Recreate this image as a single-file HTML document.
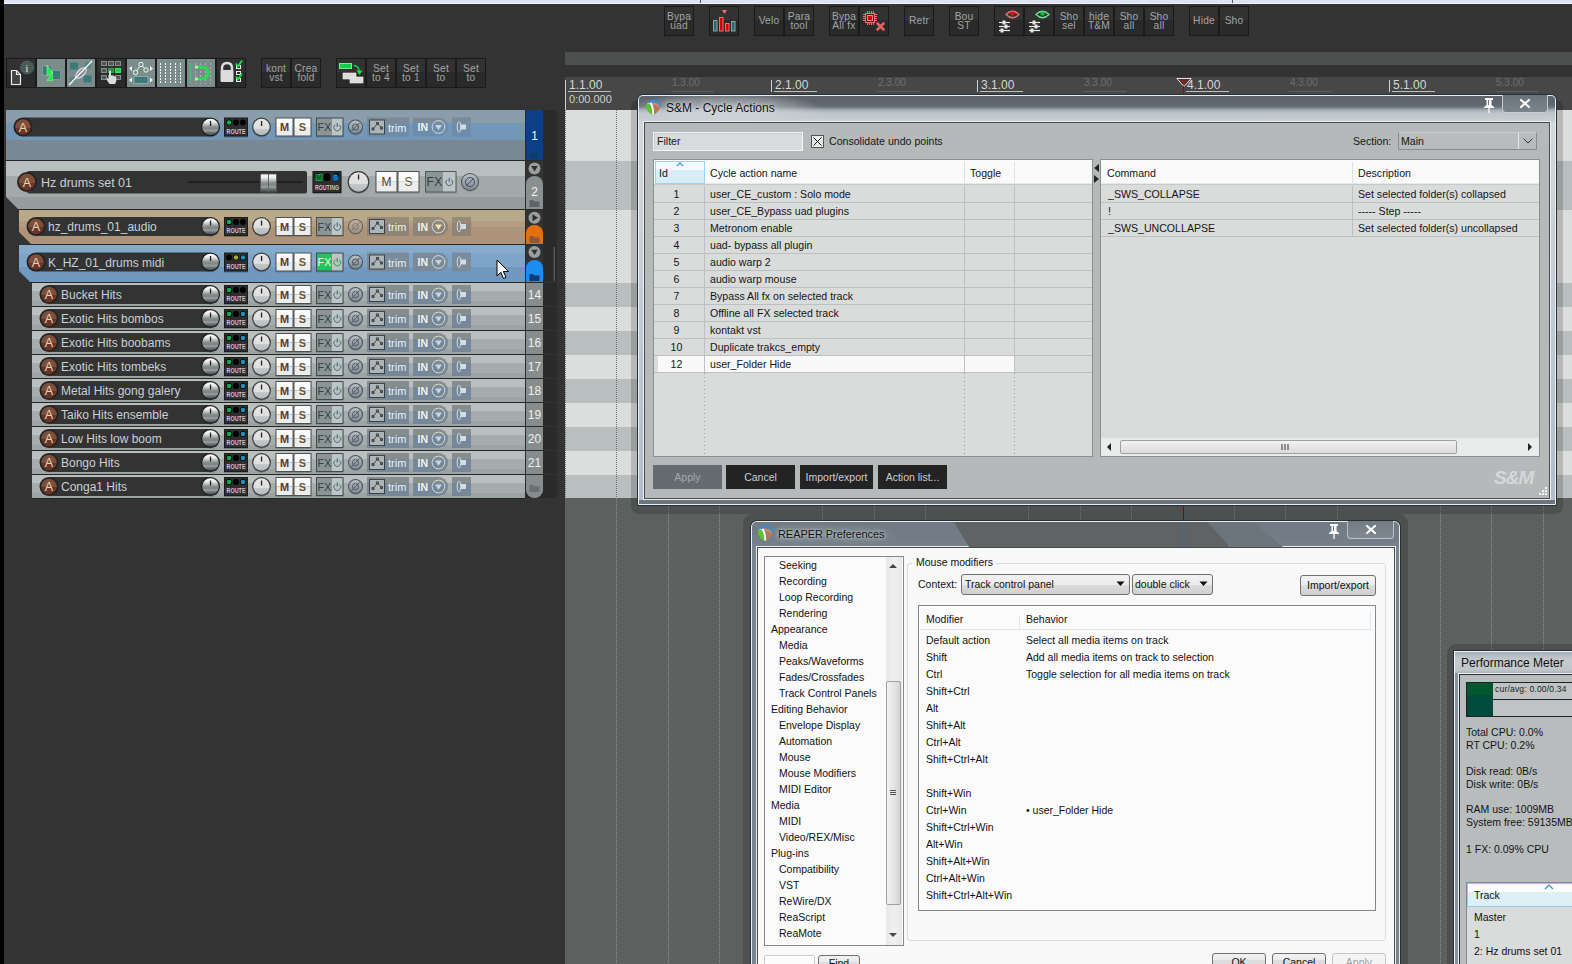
<!DOCTYPE html><html><head><meta charset="utf-8"><style>
*{margin:0;padding:0;box-sizing:border-box}
html,body{width:1572px;height:964px;overflow:hidden;background:#333;font-family:"Liberation Sans",sans-serif}
div,span,svg{position:absolute}
.tb{border:1px solid #1b1b1b;background:linear-gradient(#323232 0,#323232 48%,#2a2a2a 48%);color:#a4a4a4;font-size:10.2px;line-height:9px;letter-spacing:0.2px;text-align:center;overflow:hidden}
.tb span{position:static;display:block}
.hl{background:#7c8c8a}
</style></head><body>
<div style="left:0px;top:0px;width:1572px;height:3px;background:#dfe3f1"></div>
<div style="left:0px;top:3px;width:1572px;height:1px;background:#f4f4f8"></div>
<div style="left:700px;top:0px;width:1px;height:3px;background:#555"></div>
<div style="left:1232px;top:0px;width:1px;height:3px;background:#555"></div>
<div style="left:0px;top:0px;width:4px;height:964px;background:#000"></div>
<div class="tb" style="left:664px;top:6px;width:30px;height:30px;"><div style="left:0;top:5px;width:28px;"><span>Bypa</span><span>uad</span></div></div>
<div class="tb" style="left:709px;top:6px;width:30px;height:30px;"></div>
<div class="tb" style="left:754px;top:6px;width:30px;height:30px;"><div style="left:0;top:9px;width:28px;"><span>Velo</span></div></div>
<div class="tb" style="left:784px;top:6px;width:30px;height:30px;"><div style="left:0;top:5px;width:28px;"><span>Para</span><span>tool</span></div></div>
<div class="tb" style="left:829px;top:6px;width:30px;height:30px;"><div style="left:0;top:5px;width:28px;"><span>Bypa</span><span>All fx</span></div></div>
<div class="tb" style="left:859px;top:6px;width:30px;height:30px;"></div>
<div class="tb" style="left:904px;top:6px;width:30px;height:30px;"><div style="left:0;top:9px;width:28px;"><span>Retr</span></div></div>
<div class="tb" style="left:949px;top:6px;width:30px;height:30px;"><div style="left:0;top:5px;width:28px;"><span>Bou</span><span>ST</span></div></div>
<div class="tb" style="left:994px;top:6px;width:30px;height:30px;"></div>
<div class="tb" style="left:1024px;top:6px;width:30px;height:30px;"></div>
<div class="tb" style="left:1054px;top:6px;width:30px;height:30px;"><div style="left:0;top:5px;width:28px;"><span>Sho</span><span>sel</span></div></div>
<div class="tb" style="left:1084px;top:6px;width:30px;height:30px;"><div style="left:0;top:5px;width:28px;"><span>hide</span><span>T&amp;M</span></div></div>
<div class="tb" style="left:1114px;top:6px;width:30px;height:30px;"><div style="left:0;top:5px;width:28px;"><span>Sho</span><span>all</span></div></div>
<div class="tb" style="left:1144px;top:6px;width:30px;height:30px;"><div style="left:0;top:5px;width:28px;"><span>Sho</span><span>all</span></div></div>
<div class="tb" style="left:1189px;top:6px;width:30px;height:30px;"><div style="left:0;top:9px;width:28px;"><span>Hide</span></div></div>
<div class="tb" style="left:1219px;top:6px;width:30px;height:30px;"><div style="left:0;top:9px;width:28px;"><span>Sho</span></div></div>
<div class="tb" style="left:6px;top:58px;width:30px;height:30px;"></div>
<div class="tb" style="left:36px;top:58px;width:30px;height:30px;background:#7c8c8a;"></div>
<div class="tb" style="left:66px;top:58px;width:30px;height:30px;background:#7c8c8a;"></div>
<div class="tb" style="left:96px;top:58px;width:30px;height:30px;"></div>
<div class="tb" style="left:126px;top:58px;width:30px;height:30px;background:#7c8c8a;"></div>
<div class="tb" style="left:156px;top:58px;width:30px;height:30px;background:#7c8c8a;"></div>
<div class="tb" style="left:186px;top:58px;width:30px;height:30px;background:#7c8c8a;"></div>
<div class="tb" style="left:216px;top:58px;width:30px;height:30px;"></div>
<div class="tb" style="left:261px;top:58px;width:30px;height:30px;"><div style="left:0;top:5px;width:28px;"><span>kont</span><span>vst</span></div></div>
<div class="tb" style="left:291px;top:58px;width:30px;height:30px;"><div style="left:0;top:5px;width:28px;"><span>Crea</span><span>fold</span></div></div>
<div class="tb" style="left:336px;top:58px;width:30px;height:30px;"></div>
<div class="tb" style="left:366px;top:58px;width:30px;height:30px;"><div style="left:0;top:5px;width:28px;"><span>Set</span><span>to 4</span></div></div>
<div class="tb" style="left:396px;top:58px;width:30px;height:30px;"><div style="left:0;top:5px;width:28px;"><span>Set</span><span>to 1</span></div></div>
<div class="tb" style="left:426px;top:58px;width:30px;height:30px;"><div style="left:0;top:5px;width:28px;"><span>Set</span><span>to</span></div></div>
<div class="tb" style="left:456px;top:58px;width:30px;height:30px;"><div style="left:0;top:5px;width:28px;"><span>Set</span><span>to</span></div></div>
<svg style="left:709px;top:6px" width="30" height="30"><path d="M13 4 H18 L15.5 8 Z" fill="#f07070"/><rect x="4.5" y="14.5" width="3.5" height="10.5" fill="#2c6a68" stroke="#8aa4ac" stroke-width="1"/><rect x="10.5" y="11.5" width="3.5" height="13.5" fill="#d00000" stroke="#f07070" stroke-width="1"/><rect x="16.5" y="17.5" width="3.5" height="7.5" fill="#d00000" stroke="#f07070" stroke-width="1"/><rect x="22.5" y="15.5" width="3.5" height="9.5" fill="#2c6a68" stroke="#8aa4ac" stroke-width="1"/></svg>
<svg style="left:859px;top:6px" width="30" height="30"><rect x="8" y="5" width="1" height="2" fill="#f07070"/><rect x="8" y="17" width="1" height="2" fill="#f07070"/><rect x="4" y="8" width="2" height="1" fill="#f07070"/><rect x="16" y="8" width="2" height="1" fill="#f07070"/><rect x="10" y="5" width="1" height="2" fill="#f07070"/><rect x="10" y="17" width="1" height="2" fill="#f07070"/><rect x="4" y="10" width="2" height="1" fill="#f07070"/><rect x="16" y="10" width="2" height="1" fill="#f07070"/><rect x="12" y="5" width="1" height="2" fill="#f07070"/><rect x="12" y="17" width="1" height="2" fill="#f07070"/><rect x="4" y="12" width="2" height="1" fill="#f07070"/><rect x="16" y="12" width="2" height="1" fill="#f07070"/><rect x="14" y="5" width="1" height="2" fill="#f07070"/><rect x="14" y="17" width="1" height="2" fill="#f07070"/><rect x="4" y="14" width="2" height="1" fill="#f07070"/><rect x="16" y="14" width="2" height="1" fill="#f07070"/><rect x="6.5" y="7.5" width="9" height="9" fill="none" stroke="#f07070" stroke-width="1"/><rect x="8.5" y="9.5" width="5" height="5" fill="#d80000" stroke="#f08080" stroke-width="1"/><path d="M18.5 17.5 L24.5 23.5 M24.5 17.5 L18.5 23.5" stroke="#e86060" stroke-width="2.6" stroke-linecap="round"/></svg>
<svg style="left:994px;top:6px" width="30" height="30"><path d="M12 8.5 Q18.5 2 25 8.5 Q18.5 15 12 8.5 Z" fill="none" stroke="#f07070" stroke-width="1.3"/><circle cx="18.5" cy="7.6" r="2.2" fill="#e01010"/><g stroke="#e8e8e8" stroke-width="1.2"><line x1="5" y1="16.5" x2="16" y2="16.5"/><line x1="5" y1="20.5" x2="16" y2="20.5"/><line x1="5" y1="24.5" x2="16" y2="24.5"/></g><g fill="#e8e8e8"><rect x="8.5" y="14.5" width="3" height="4"/><rect x="10.5" y="18.5" width="3" height="4"/><rect x="6.5" y="22.5" width="3" height="4"/></g></svg>
<svg style="left:1024px;top:6px" width="30" height="30"><path d="M12 8.5 Q18.5 2 25 8.5 Q18.5 15 12 8.5 Z" fill="none" stroke="#70e090" stroke-width="1.3"/><circle cx="18.5" cy="7.6" r="2.2" fill="#10c040"/><g stroke="#e8e8e8" stroke-width="1.2"><line x1="5" y1="16.5" x2="16" y2="16.5"/><line x1="5" y1="20.5" x2="16" y2="20.5"/><line x1="5" y1="24.5" x2="16" y2="24.5"/></g><g fill="#e8e8e8"><rect x="8.5" y="14.5" width="3" height="4"/><rect x="10.5" y="18.5" width="3" height="4"/><rect x="6.5" y="22.5" width="3" height="4"/></g></svg>
<svg style="left:6px;top:58px" width="30" height="30"><circle cx="21" cy="9.5" r="6.5" fill="#555" stroke="#3a7a80" stroke-width="1" stroke-dasharray="1.5 1"/><text x="21" y="13.5" font-size="10" text-anchor="middle" fill="#eee" font-family="Liberation Serif">i</text><path d="M5.5 12.5 H10.5 L14.5 16.5 V26.5 H5.5 Z" fill="#444" stroke="#eee" stroke-width="1.2"/><path d="M10.5 12.5 V16.5 H14.5" fill="none" stroke="#eee" stroke-width="1.2"/></svg>
<svg style="left:36px;top:58px" width="30" height="30"><rect x="6.5" y="8" width="9" height="9" fill="#3a7a78" stroke="#90a8a8" stroke-width="0.6"/><rect x="15.5" y="12.5" width="9" height="9" fill="#3a7a78" stroke="#90a8a8" stroke-width="0.6"/><path d="M11 7 L16.5 15 L11 17.5 Z" fill="#18f040" stroke="#a8f8b0" stroke-width="0.5"/><path d="M16.5 13.5 V22.8 H11 Z" fill="#18f040" stroke="#a8f8b0" stroke-width="0.5"/></svg>
<svg style="left:66px;top:58px" width="30" height="30"><rect x="4" y="4.5" width="8" height="7" fill="#3a7a78"/><rect x="17.5" y="17.5" width="8" height="7" fill="#3a7a78"/><rect x="19" y="4" width="6" height="6" fill="#3a7a78" opacity="0.6"/><rect x="4" y="19" width="5" height="5" fill="#3a7a78" opacity="0.6"/><ellipse cx="15" cy="15" rx="3.2" ry="6.5" transform="rotate(45 15 15)" fill="none" stroke="#dde" stroke-width="1.3"/><line x1="3" y1="27" x2="26" y2="3" stroke="#f4f8f8" stroke-width="1.4"/></svg>
<svg style="left:96px;top:58px" width="30" height="30"><rect x="5.5" y="3.5" width="5" height="4" fill="#555" stroke="#7e9090" stroke-width="1"/><rect x="12.5" y="3.5" width="5" height="4" fill="#555" stroke="#7e9090" stroke-width="1"/><rect x="19.5" y="3.5" width="5" height="4" fill="#555" stroke="#7e9090" stroke-width="1"/><rect x="5.5" y="10.5" width="5" height="4" fill="#555" stroke="#7e9090" stroke-width="1"/><rect x="5.5" y="17.5" width="5" height="4" fill="#555" stroke="#7e9090" stroke-width="1"/><rect x="12.5" y="17.5" width="5" height="4" fill="#555" stroke="#7e9090" stroke-width="1"/><rect x="19.5" y="17.5" width="5" height="4" fill="#555" stroke="#7e9090" stroke-width="1"/><rect x="19.5" y="10.5" width="5" height="4" fill="#18d848" stroke="#40e060"/><rect x="12.5" y="10.5" width="5" height="4" fill="#18d848" stroke="#40e060" opacity="0.6"/><path d="M13.5 26 Q11 23 10.5 20.5 Q11 19.5 12.5 20.5 L13 21 V13 Q14 11.8 15 13 V18 Q16 17.5 17 18.2 Q18 17.8 18.8 18.6 Q19.8 18.4 20.3 19.4 V23 Q19.8 25 19 26 Z" fill="#dcdcdc"/></svg>
<svg style="left:126px;top:58px" width="30" height="30"><path d="M9.5 14.5 L15 6.5 L20 12" fill="none" stroke="#e8f4f4" stroke-width="1"/><circle cx="9.5" cy="14.5" r="2.2" fill="#7c8c8a" stroke="#e8ffff" stroke-width="1"/><circle cx="15" cy="6.5" r="2.2" fill="#7c8c8a" stroke="#e8ffff" stroke-width="1"/><circle cx="20" cy="12" r="2.2" fill="#7c8c8a" stroke="#e8ffff" stroke-width="1"/><path d="M3 10.5 L6 8 V13 Z M27 10.5 L24 8 V13 Z M3 22 L6 19.5 V24.5 Z M27 22 L24 19.5 V24.5 Z" fill="#f4f8f8"/><rect x="8" y="18.5" width="14" height="7" fill="#3a7a78" stroke="#90a8a8" stroke-width="1"/></svg>
<svg style="left:156px;top:58px" width="30" height="30"><line x1="4.5" y1="5" x2="4.5" y2="26" stroke="#f4f4f4" stroke-width="1.2" stroke-dasharray="2 1" shape-rendering="crispEdges"/><line x1="9.5" y1="5" x2="9.5" y2="26" stroke="#f4f4f4" stroke-width="1.2" stroke-dasharray="2 1" shape-rendering="crispEdges"/><line x1="14.5" y1="5" x2="14.5" y2="26" stroke="#f4f4f4" stroke-width="1.2" stroke-dasharray="2 1" shape-rendering="crispEdges"/><line x1="19.5" y1="5" x2="19.5" y2="26" stroke="#f4f4f4" stroke-width="1.2" stroke-dasharray="2 1" shape-rendering="crispEdges"/><line x1="24.5" y1="5" x2="24.5" y2="26" stroke="#f4f4f4" stroke-width="1.2" stroke-dasharray="2 1" shape-rendering="crispEdges"/></svg>
<svg style="left:186px;top:58px" width="30" height="30"><line x1="4.5" y1="5" x2="4.5" y2="26" stroke="#30e060" stroke-width="1" stroke-dasharray="2 1" shape-rendering="crispEdges"/><line x1="9.5" y1="5" x2="9.5" y2="26" stroke="#a8b4b4" stroke-width="1" stroke-dasharray="2 2" shape-rendering="crispEdges"/><line x1="14.5" y1="5" x2="14.5" y2="26" stroke="#a8b4b4" stroke-width="1" stroke-dasharray="2 2" shape-rendering="crispEdges"/><line x1="19.5" y1="5" x2="19.5" y2="26" stroke="#a8b4b4" stroke-width="1" stroke-dasharray="2 2" shape-rendering="crispEdges"/><line x1="24.5" y1="5" x2="24.5" y2="26" stroke="#a8b4b4" stroke-width="1" stroke-dasharray="2 2" shape-rendering="crispEdges"/><path d="M9 9 H15 Q22 9 22 15 Q22 21 15 21 H9" fill="none" stroke="#18e848" stroke-width="2.6"/><path d="M9 9 H12 M9 21 H12" stroke="#a8f8b8" stroke-width="2.6"/></svg>
<svg style="left:216px;top:58px" width="30" height="30"><path d="M6 12 V10 Q6 5 11 5 Q16 5 16 10 V12" fill="none" stroke="#dcdcdc" stroke-width="2.4"/><rect x="4.5" y="12" width="13" height="12" rx="1" fill="#dcdcdc"/><rect x="20.5" y="7.5" width="4" height="3" fill="none" stroke="#eee" stroke-width="1"/><rect x="20.5" y="13.5" width="4" height="3" fill="none" stroke="#eee" stroke-width="1"/><rect x="20.5" y="20.5" width="4" height="3" fill="none" stroke="#eee" stroke-width="1"/><path d="M20 5.5 L22 8.5 L26 2.5 M20 18.5 L22 21.5 L26 15.5" fill="none" stroke="#18e040" stroke-width="1.8"/></svg>
<svg style="left:336px;top:58px" width="30" height="30"><rect x="3.5" y="5.5" width="12" height="5" fill="#10d048" stroke="#70f090" stroke-width="1"/><path d="M17.5 7.5 Q22.5 7.5 23.5 13.5" fill="none" stroke="#10e048" stroke-width="1.5"/><path d="M20.5 12.5 H26.5 L23.5 17 Z" fill="#10e048"/><rect x="7" y="15" width="13" height="6" fill="#dadcdc" stroke="#f0f0f0" stroke-width="0.6"/><rect x="14" y="19" width="13" height="6" fill="#dadcdc" stroke="#f0f0f0" stroke-width="0.6"/></svg>
<div style="left:565px;top:52px;width:1007px;height:13px;background:#4e504f"></div>
<div style="left:565px;top:77px;width:1007px;height:33px;background:#474747"></div>
<div style="left:565px;top:80px;width:1px;height:30px;background:#cfcfcf"></div>
<div style="left:569px;top:79px;font-size:12px;color:#d6d6d6;line-height:12px">1.1.00</div>
<div style="left:568px;top:91px;width:43px;height:1px;background:#bdbdbd"></div>
<div style="left:569px;top:94px;font-size:11px;color:#d0d0d0;line-height:11px">0:00.000</div>
<div style="left:672px;top:78px;font-size:10px;color:#6e6e6e;line-height:10px">1.3.00</div>
<div style="left:671px;top:91px;width:43px;height:1px;background:#5e5e5e"></div>
<div style="left:771px;top:80px;width:1px;height:12px;background:#cfcfcf"></div>
<div style="left:775px;top:79px;font-size:12px;color:#d6d6d6;line-height:12px">2.1.00</div>
<div style="left:774px;top:91px;width:43px;height:1px;background:#bdbdbd"></div>
<div style="left:878px;top:78px;font-size:10px;color:#6e6e6e;line-height:10px">2.3.00</div>
<div style="left:877px;top:91px;width:43px;height:1px;background:#5e5e5e"></div>
<div style="left:977px;top:80px;width:1px;height:12px;background:#cfcfcf"></div>
<div style="left:981px;top:79px;font-size:12px;color:#d6d6d6;line-height:12px">3.1.00</div>
<div style="left:980px;top:91px;width:43px;height:1px;background:#bdbdbd"></div>
<div style="left:1084px;top:78px;font-size:10px;color:#6e6e6e;line-height:10px">3.3.00</div>
<div style="left:1083px;top:91px;width:43px;height:1px;background:#5e5e5e"></div>
<div style="left:1183px;top:80px;width:1px;height:12px;background:#cfcfcf"></div>
<div style="left:1187px;top:79px;font-size:12px;color:#d6d6d6;line-height:12px">4.1.00</div>
<div style="left:1186px;top:91px;width:43px;height:1px;background:#bdbdbd"></div>
<div style="left:1290px;top:78px;font-size:10px;color:#6e6e6e;line-height:10px">4.3.00</div>
<div style="left:1289px;top:91px;width:43px;height:1px;background:#5e5e5e"></div>
<div style="left:1389px;top:80px;width:1px;height:12px;background:#cfcfcf"></div>
<div style="left:1393px;top:79px;font-size:12px;color:#d6d6d6;line-height:12px">5.1.00</div>
<div style="left:1392px;top:91px;width:43px;height:1px;background:#bdbdbd"></div>
<div style="left:1496px;top:78px;font-size:10px;color:#6e6e6e;line-height:10px">5.3.00</div>
<div style="left:1495px;top:91px;width:43px;height:1px;background:#5e5e5e"></div>
<svg style="left:1176px;top:77px" width="17" height="33"><path d="M0.8 1.5 H15.2 L8 9.5 Z" fill="#6a2a22" stroke="#e0e0e0" stroke-width="1"/><line x1="7.5" y1="9" x2="7.5" y2="33" stroke="#8a1010"/></svg>
<div style="left:565px;top:110px;width:1007px;height:51px;background:#dcdedd"></div>
<div style="left:565px;top:161px;width:1007px;height:49px;background:#b9bfbe"></div>
<div style="left:565px;top:210px;width:1007px;height:73px;background:#dcdedd"></div>
<div style="left:565px;top:283px;width:1007px;height:24px;background:#b9bfbe"></div>
<div style="left:565px;top:307px;width:1007px;height:24px;background:#dcdedd"></div>
<div style="left:565px;top:331px;width:1007px;height:24px;background:#b9bfbe"></div>
<div style="left:565px;top:355px;width:1007px;height:24px;background:#dcdedd"></div>
<div style="left:565px;top:379px;width:1007px;height:24px;background:#b9bfbe"></div>
<div style="left:565px;top:403px;width:1007px;height:24px;background:#dcdedd"></div>
<div style="left:565px;top:427px;width:1007px;height:24px;background:#b9bfbe"></div>
<div style="left:565px;top:451px;width:1007px;height:24px;background:#dcdedd"></div>
<div style="left:565px;top:475px;width:1007px;height:23px;background:#b9bfbe"></div>
<div style="left:565px;top:498px;width:1007px;height:466px;background:#5e5f5f"></div>
<div style="left:616px;top:110px;width:1px;height:388px;background:repeating-linear-gradient(#6c7070 0 1px,transparent 1px 2px)"></div>
<div style="left:616px;top:498px;width:1px;height:466px;background:repeating-linear-gradient(#8c9090 0 1px,transparent 1px 2px)"></div>
<div style="left:668px;top:110px;width:1px;height:388px;background:repeating-linear-gradient(#6c7070 0 1px,transparent 1px 2px)"></div>
<div style="left:668px;top:498px;width:1px;height:466px;background:repeating-linear-gradient(#8c9090 0 1px,transparent 1px 2px)"></div>
<div style="left:719px;top:110px;width:1px;height:388px;background:repeating-linear-gradient(#6c7070 0 1px,transparent 1px 2px)"></div>
<div style="left:719px;top:498px;width:1px;height:466px;background:repeating-linear-gradient(#8c9090 0 1px,transparent 1px 2px)"></div>
<div style="left:771px;top:110px;width:1px;height:388px;background:repeating-linear-gradient(#6c7070 0 1px,transparent 1px 2px)"></div>
<div style="left:822px;top:110px;width:1px;height:388px;background:repeating-linear-gradient(#6c7070 0 1px,transparent 1px 2px)"></div>
<div style="left:822px;top:498px;width:1px;height:466px;background:repeating-linear-gradient(#8c9090 0 1px,transparent 1px 2px)"></div>
<div style="left:874px;top:110px;width:1px;height:388px;background:repeating-linear-gradient(#6c7070 0 1px,transparent 1px 2px)"></div>
<div style="left:874px;top:498px;width:1px;height:466px;background:repeating-linear-gradient(#8c9090 0 1px,transparent 1px 2px)"></div>
<div style="left:925px;top:110px;width:1px;height:388px;background:repeating-linear-gradient(#6c7070 0 1px,transparent 1px 2px)"></div>
<div style="left:925px;top:498px;width:1px;height:466px;background:repeating-linear-gradient(#8c9090 0 1px,transparent 1px 2px)"></div>
<div style="left:977px;top:110px;width:1px;height:388px;background:repeating-linear-gradient(#6c7070 0 1px,transparent 1px 2px)"></div>
<div style="left:1028px;top:110px;width:1px;height:388px;background:repeating-linear-gradient(#6c7070 0 1px,transparent 1px 2px)"></div>
<div style="left:1028px;top:498px;width:1px;height:466px;background:repeating-linear-gradient(#8c9090 0 1px,transparent 1px 2px)"></div>
<div style="left:1080px;top:110px;width:1px;height:388px;background:repeating-linear-gradient(#6c7070 0 1px,transparent 1px 2px)"></div>
<div style="left:1080px;top:498px;width:1px;height:466px;background:repeating-linear-gradient(#8c9090 0 1px,transparent 1px 2px)"></div>
<div style="left:1131px;top:110px;width:1px;height:388px;background:repeating-linear-gradient(#6c7070 0 1px,transparent 1px 2px)"></div>
<div style="left:1131px;top:498px;width:1px;height:466px;background:repeating-linear-gradient(#8c9090 0 1px,transparent 1px 2px)"></div>
<div style="left:1182px;top:110px;width:1px;height:388px;background:repeating-linear-gradient(#6c7070 0 1px,transparent 1px 2px)"></div>
<div style="left:1234px;top:110px;width:1px;height:388px;background:repeating-linear-gradient(#6c7070 0 1px,transparent 1px 2px)"></div>
<div style="left:1234px;top:498px;width:1px;height:466px;background:repeating-linear-gradient(#8c9090 0 1px,transparent 1px 2px)"></div>
<div style="left:1285px;top:110px;width:1px;height:388px;background:repeating-linear-gradient(#6c7070 0 1px,transparent 1px 2px)"></div>
<div style="left:1285px;top:498px;width:1px;height:466px;background:repeating-linear-gradient(#8c9090 0 1px,transparent 1px 2px)"></div>
<div style="left:1337px;top:110px;width:1px;height:388px;background:repeating-linear-gradient(#6c7070 0 1px,transparent 1px 2px)"></div>
<div style="left:1337px;top:498px;width:1px;height:466px;background:repeating-linear-gradient(#8c9090 0 1px,transparent 1px 2px)"></div>
<div style="left:1388px;top:110px;width:1px;height:388px;background:repeating-linear-gradient(#6c7070 0 1px,transparent 1px 2px)"></div>
<div style="left:1440px;top:110px;width:1px;height:388px;background:repeating-linear-gradient(#6c7070 0 1px,transparent 1px 2px)"></div>
<div style="left:1440px;top:498px;width:1px;height:466px;background:repeating-linear-gradient(#8c9090 0 1px,transparent 1px 2px)"></div>
<div style="left:1491px;top:110px;width:1px;height:388px;background:repeating-linear-gradient(#6c7070 0 1px,transparent 1px 2px)"></div>
<div style="left:1491px;top:498px;width:1px;height:466px;background:repeating-linear-gradient(#8c9090 0 1px,transparent 1px 2px)"></div>
<div style="left:1543px;top:110px;width:1px;height:388px;background:repeating-linear-gradient(#6c7070 0 1px,transparent 1px 2px)"></div>
<div style="left:1543px;top:498px;width:1px;height:466px;background:repeating-linear-gradient(#8c9090 0 1px,transparent 1px 2px)"></div>
<div style="left:565px;top:110px;width:1px;height:388px;background:repeating-linear-gradient(#777 0 1px,transparent 1px 2px)"></div>
<div style="left:1183px;top:498px;width:1px;height:466px;background:#8a1010"></div>
<svg style="left:0;top:110px" width="545" height="50"><defs>
<linearGradient id="gvol" x1="0" y1="0" x2="0" y2="1"><stop offset="0" stop-color="#ffffff"/><stop offset="0.2" stop-color="#eceeee"/><stop offset="0.38" stop-color="#b0b4b4"/><stop offset="0.5" stop-color="#868c8c"/><stop offset="0.62" stop-color="#7e8686"/><stop offset="0.72" stop-color="#9aa0a0"/><stop offset="0.84" stop-color="#687070"/><stop offset="0.95" stop-color="#505858"/><stop offset="1" stop-color="#202048"/></linearGradient>
<linearGradient id="gpan" x1="0" y1="0" x2="0" y2="1"><stop offset="0" stop-color="#e6e6e6"/><stop offset="0.6" stop-color="#dedede"/><stop offset="0.62" stop-color="#c4c8c8"/><stop offset="1" stop-color="#b4b8b8"/></linearGradient>
<linearGradient id="gph" x1="0" y1="0" x2="0" y2="1"><stop offset="0" stop-color="#b8c0c4"/><stop offset="0.5" stop-color="#98a4ac"/><stop offset="1" stop-color="#7a8890"/></linearGradient>
</defs><clipPath id="tc110"><path d="M6 0 H525 V50 H6 L6 50 Z"/></clipPath><g clip-path="url(#tc110)"><rect x="0" y="0" width="525" height="13" fill="#8a9daa"/><rect x="0" y="13" width="525" height="17" fill="#7297b7"/><rect x="0" y="30" width="525" height="20" fill="#7a8893"/></g><rect x="23" y="7.5" width="187" height="19" rx="2" fill="#333"/><circle cx="23" cy="18.5" r="8.5" fill="#5a6470" opacity="0.45"/><circle cx="23" cy="17" r="9.5" fill="#222"/><clipPath id="rc2317"><circle cx="23" cy="17" r="7.8"/></clipPath><g clip-path="url(#rc2317)"><rect x="13.5" y="7.5" width="19.0" height="10.5" fill="#7e4e38"/><rect x="13.5" y="18" width="19.0" height="9.5" fill="#6a3628"/></g><text x="23" y="21.8" font-size="12.5" text-anchor="middle" fill="#e6d2b4" font-family="Liberation Sans">A</text><circle cx="210.5" cy="18.5" r="9" fill="#3a4a5a" opacity="0.35"/><circle cx="210.5" cy="17" r="9.5" fill="#1e1e1e"/><circle cx="210.5" cy="17" r="8.3" fill="url(#gvol)"/><rect x="209.9" y="11" width="1.3" height="5" fill="#222"/><rect x="224" y="8.5" width="24" height="19" fill="#000" opacity="0.25"/><rect x="224" y="7.5" width="24" height="19" fill="#1c1c1c"/><rect x="225" y="8.5" width="22" height="17" fill="#2e2e2e"/><circle cx="229.0" cy="12.5" r="3" fill="#000"/><circle cx="229.0" cy="12.5" r="2.3" fill="#10b050"/><circle cx="236.0" cy="12.5" r="3" fill="#000"/><circle cx="243.0" cy="12.5" r="3" fill="#000"/><text x="236.0" y="23.5" font-size="7.5" text-anchor="middle" fill="#c8c8c8" font-family="Liberation Sans" font-weight="bold" textLength="19" lengthAdjust="spacingAndGlyphs">ROUTE</text><circle cx="261.5" cy="18.5" r="9" fill="#3a4a5a" opacity="0.3"/><circle cx="261.5" cy="17" r="9.4" fill="#3c3c3c"/><circle cx="261.5" cy="17" r="8.2" fill="url(#gpan)"/><rect x="260.9" y="11" width="1.3" height="5" fill="#222"/><rect x="275.5" y="8.5" width="18" height="19" fill="#2a4050" opacity="0.25"/><rect x="275.5" y="7.5" width="18" height="19" fill="#505050"/><rect x="276.5" y="8.5" width="16" height="8.5" fill="#fbfbfb"/><rect x="276.5" y="17.0" width="16" height="8.5" fill="#ebecec"/><text x="284.5" y="21.0" font-size="11" font-weight="bold" text-anchor="middle" fill="#5c3a2a" font-family="Liberation Sans">M</text><rect x="293.5" y="8.5" width="18" height="19" fill="#2a4050" opacity="0.25"/><rect x="293.5" y="7.5" width="18" height="19" fill="#505050"/><rect x="294.5" y="8.5" width="16" height="8.5" fill="#fbfbfb"/><rect x="294.5" y="17.0" width="16" height="8.5" fill="#ebecec"/><text x="302.5" y="21.0" font-size="11" font-weight="bold" text-anchor="middle" fill="#6a5838" font-family="Liberation Sans">S</text><rect x="316" y="8.5" width="27.5" height="19" fill="#2a4050" opacity="0.22"/><rect x="316" y="7.5" width="27.5" height="19" fill="#3e4a50"/><rect x="317" y="8.5" width="15" height="17" fill="#8a9696"/><rect x="332" y="8.5" width="10.5" height="17" fill="#bcc4c4"/><text x="324.5" y="21.0" font-size="10.5" text-anchor="middle" fill="#333b3b" font-family="Liberation Sans" letter-spacing="0.3">FX</text><path d="M335.05 14.9 A3.4 3.4 0 1 0 339.45 14.9" fill="none" stroke="#4a6a80" stroke-width="1"/><line x1="337.25" y1="13.0" x2="337.25" y2="17.0" stroke="#4a6a80" stroke-width="1.2"/><circle cx="355.5" cy="18" r="7.5" fill="#4a6070" opacity="0.25"/><circle cx="355.5" cy="17" r="7.5" fill="#4a5058"/><circle cx="355.5" cy="17" r="6.5" fill="url(#gph)"/><circle cx="355.5" cy="17" r="3.0" fill="none" stroke="#4a5260" stroke-width="1"/><line x1="351.5" y1="21" x2="359.5" y2="13" stroke="#4a5260" stroke-width="1"/><rect x="367" y="7.5" width="42" height="6" fill="#7a8a96"/><rect x="367" y="13.5" width="42" height="13" fill="#6e8cab"/><rect x="369" y="9.5" width="16" height="15" fill="#3c4246"/><rect x="370" y="10.5" width="14" height="13" fill="#acb6b6"/><polyline points="373,19.0 377.5,13.5 381.5,18.0" fill="none" stroke="#444c54" stroke-width="1"/><rect x="371.5" y="17.5" width="3" height="3" fill="#4a4e54"/><rect x="376" y="12.0" width="3" height="3" fill="#4a4e54"/><rect x="380" y="16.5" width="3" height="3" fill="#4a4e54"/><text x="388" y="21.5" font-size="11" fill="#eef2f2" font-family="Liberation Sans">trim</text><clipPath id="ib4137.5"><path d="M413 7.5 H438.5 A9.5 9.5 0 0 1 438.5 26.5 H413 Z"/></clipPath><g clip-path="url(#ib4137.5)"><rect x="413" y="7.5" width="36" height="6" fill="#7a8a96"/><rect x="413" y="13.5" width="36" height="13" fill="#6e8cab"/></g><text x="417.5" y="21.0" font-size="10.5" font-weight="bold" fill="#f0f2f2" font-family="Liberation Sans">IN</text><circle cx="438.5" cy="17.0" r="6.4" fill="none" stroke="#d4dadc" stroke-width="1"/><path d="M435.0 15.0 H442.0 L438.5 20.2 Z" fill="#c8d4dc"/><rect x="452" y="7.5" width="19" height="6" fill="#7a8a96"/><rect x="452" y="13.5" width="19" height="13" fill="#6e8cab"/><rect x="460" y="14.5" width="6" height="5" fill="#d2dce2"/><ellipse cx="459" cy="17.0" rx="1.8" ry="5.3" fill="#6e8cab" stroke="#d2dce2" stroke-width="1"/></svg>
<div style="left:6px;top:160px;width:519px;height:1px;background:#262626"></div>
<svg style="left:0;top:161px" width="545" height="48"><defs>
<linearGradient id="gvol" x1="0" y1="0" x2="0" y2="1"><stop offset="0" stop-color="#ffffff"/><stop offset="0.2" stop-color="#eceeee"/><stop offset="0.38" stop-color="#b0b4b4"/><stop offset="0.5" stop-color="#868c8c"/><stop offset="0.62" stop-color="#7e8686"/><stop offset="0.72" stop-color="#9aa0a0"/><stop offset="0.84" stop-color="#687070"/><stop offset="0.95" stop-color="#505858"/><stop offset="1" stop-color="#202048"/></linearGradient>
<linearGradient id="gpan" x1="0" y1="0" x2="0" y2="1"><stop offset="0" stop-color="#e6e6e6"/><stop offset="0.6" stop-color="#dedede"/><stop offset="0.62" stop-color="#c4c8c8"/><stop offset="1" stop-color="#b4b8b8"/></linearGradient>
<linearGradient id="gph" x1="0" y1="0" x2="0" y2="1"><stop offset="0" stop-color="#b8c0c4"/><stop offset="0.5" stop-color="#98a4ac"/><stop offset="1" stop-color="#7a8890"/></linearGradient>
</defs><clipPath id="tc161"><path d="M6 0 H525 V48 H18 L6 36 Z"/></clipPath><g clip-path="url(#tc161)"><rect x="0" y="0" width="525" height="15" fill="#b8bfbe"/><rect x="0" y="15" width="525" height="21" fill="#a2aaa9"/><rect x="0" y="36" width="525" height="12" fill="#969c9b"/></g><rect x="27" y="10" width="280" height="22.5" rx="2" fill="#333"/><circle cx="27" cy="22.5" r="9" fill="#5a6470" opacity="0.45"/><circle cx="27" cy="21" r="10" fill="#222"/><clipPath id="rc2721"><circle cx="27" cy="21" r="8.3"/></clipPath><g clip-path="url(#rc2721)"><rect x="17" y="11" width="20" height="11" fill="#7e4e38"/><rect x="17" y="22" width="20" height="10" fill="#6a3628"/></g><text x="27" y="25.8" font-size="12.5" text-anchor="middle" fill="#e6d2b4" font-family="Liberation Sans">A</text><text x="41" y="25.5" font-size="12.5" fill="#cad0d6" font-family="Liberation Sans">Hz drums set 01</text><rect x="188" y="20.5" width="115" height="1" fill="#111"/><rect x="260.5" y="13" width="16" height="18" rx="1" fill="url(#gvol)" stroke="#555" stroke-width="0.8"/><rect x="268" y="13" width="1" height="18" fill="#666"/><rect x="312.5" y="11" width="29" height="22" fill="#000" opacity="0.25"/><rect x="312.5" y="10" width="29" height="22" fill="#1c1c1c"/><rect x="313.5" y="11" width="27" height="20" fill="#2e2e2e"/><circle cx="317.5" cy="15" r="3" fill="#000"/><circle cx="327.0" cy="15" r="3" fill="#000"/><circle cx="336.5" cy="15" r="3" fill="#000"/><text x="327.0" y="29" font-size="7" text-anchor="middle" fill="#c8c8c8" font-family="Liberation Sans" font-weight="bold" textLength="24" lengthAdjust="spacingAndGlyphs">ROUTING</text><rect x="315.5" y="13" width="7" height="7" fill="#10a040"/><text x="319" y="19.2" font-size="6.5" text-anchor="middle" fill="#0a4020" font-family="Liberation Sans" font-weight="bold">M</text><circle cx="327" cy="16.5" r="3.6" fill="#000"/><circle cx="335.5" cy="16.5" r="3.6" fill="#0a4a80"/><text x="335.5" y="19" font-size="6.5" text-anchor="middle" fill="#10a0e0" font-family="Liberation Sans" font-weight="bold">S</text><circle cx="358.5" cy="22.5" r="10.5" fill="#3a4a5a" opacity="0.3"/><circle cx="358.5" cy="21" r="10.9" fill="#3c3c3c"/><circle cx="358.5" cy="21" r="9.7" fill="url(#gpan)"/><rect x="357.9" y="13.5" width="1.3" height="5" fill="#222"/><rect x="375.5" y="11" width="22" height="21.5" fill="#2a4050" opacity="0.25"/><rect x="375.5" y="10" width="22" height="21.5" fill="#505050"/><rect x="376.5" y="11" width="20" height="9.75" fill="#fbfbfb"/><rect x="376.5" y="20.75" width="20" height="9.75" fill="#ebecec"/><text x="386.5" y="24.75" font-size="12"  text-anchor="middle" fill="#5c3a2a" font-family="Liberation Sans">M</text><rect x="397.5" y="11" width="22" height="21.5" fill="#2a4050" opacity="0.25"/><rect x="397.5" y="10" width="22" height="21.5" fill="#505050"/><rect x="398.5" y="11" width="20" height="9.75" fill="#fbfbfb"/><rect x="398.5" y="20.75" width="20" height="9.75" fill="#ebecec"/><text x="408.5" y="24.75" font-size="12"  text-anchor="middle" fill="#6a5838" font-family="Liberation Sans">S</text><rect x="425" y="11" width="31.5" height="21.5" fill="#2a4050" opacity="0.22"/><rect x="425" y="10" width="31.5" height="21.5" fill="#505a5a"/><rect x="426" y="11" width="17" height="19.5" fill="#8a9696"/><rect x="443" y="11" width="12.5" height="19.5" fill="#bcc4c4"/><text x="434.5" y="24.75" font-size="12" text-anchor="middle" fill="#333b3b" font-family="Liberation Sans" letter-spacing="0.3">FX</text><path d="M447.05 18.65 A3.4 3.4 0 1 0 451.45 18.65" fill="none" stroke="#4a6a80" stroke-width="1"/><line x1="449.25" y1="16.75" x2="449.25" y2="20.75" stroke="#4a6a80" stroke-width="1.2"/><circle cx="470" cy="22" r="9" fill="#4a6070" opacity="0.25"/><circle cx="470" cy="21" r="9" fill="#4a5058"/><circle cx="470" cy="21" r="8" fill="url(#gph)"/><circle cx="470" cy="21" r="4.5" fill="none" stroke="#4a5260" stroke-width="1"/><line x1="466" y1="25" x2="474" y2="17" stroke="#4a5260" stroke-width="1"/></svg>
<div style="left:18px;top:209px;width:507px;height:1px;background:#262626"></div>
<svg style="left:0;top:210px" width="545" height="34"><defs>
<linearGradient id="gvol" x1="0" y1="0" x2="0" y2="1"><stop offset="0" stop-color="#ffffff"/><stop offset="0.2" stop-color="#eceeee"/><stop offset="0.38" stop-color="#b0b4b4"/><stop offset="0.5" stop-color="#868c8c"/><stop offset="0.62" stop-color="#7e8686"/><stop offset="0.72" stop-color="#9aa0a0"/><stop offset="0.84" stop-color="#687070"/><stop offset="0.95" stop-color="#505858"/><stop offset="1" stop-color="#202048"/></linearGradient>
<linearGradient id="gpan" x1="0" y1="0" x2="0" y2="1"><stop offset="0" stop-color="#e6e6e6"/><stop offset="0.6" stop-color="#dedede"/><stop offset="0.62" stop-color="#c4c8c8"/><stop offset="1" stop-color="#b4b8b8"/></linearGradient>
<linearGradient id="gph" x1="0" y1="0" x2="0" y2="1"><stop offset="0" stop-color="#b8c0c4"/><stop offset="0.5" stop-color="#98a4ac"/><stop offset="1" stop-color="#7a8890"/></linearGradient>
</defs><clipPath id="tc210"><path d="M19 0 H525 V34 H31 L19 22 Z"/></clipPath><g clip-path="url(#tc210)"><rect x="0" y="0" width="525" height="11" fill="#b8a98b"/><rect x="0" y="11" width="525" height="6" fill="#b39d82"/><rect x="0" y="17" width="525" height="17" fill="#ad9377"/></g><rect x="36" y="7.0" width="174" height="19" rx="2" fill="#333"/><circle cx="36" cy="18.0" r="8.5" fill="#5a6470" opacity="0.45"/><circle cx="36" cy="16.5" r="9.5" fill="#222"/><clipPath id="rc3616.5"><circle cx="36" cy="16.5" r="7.8"/></clipPath><g clip-path="url(#rc3616.5)"><rect x="26.5" y="7.0" width="19.0" height="10.5" fill="#7e4e38"/><rect x="26.5" y="17.5" width="19.0" height="9.5" fill="#6a3628"/></g><text x="36" y="21.3" font-size="12.5" text-anchor="middle" fill="#e6d2b4" font-family="Liberation Sans">A</text><text x="48" y="21.0" font-size="12" fill="#cad0d6" font-family="Liberation Sans">hz_drums_01_audio</text><circle cx="210.5" cy="18.0" r="9" fill="#3a4a5a" opacity="0.35"/><circle cx="210.5" cy="16.5" r="9.5" fill="#1e1e1e"/><circle cx="210.5" cy="16.5" r="8.3" fill="url(#gvol)"/><rect x="209.9" y="10.5" width="1.3" height="5" fill="#222"/><rect x="224" y="8.0" width="24" height="19" fill="#000" opacity="0.25"/><rect x="224" y="7.0" width="24" height="19" fill="#1c1c1c"/><rect x="225" y="8.0" width="22" height="17" fill="#2e2e2e"/><circle cx="229.0" cy="12.0" r="3" fill="#000"/><circle cx="229.0" cy="12.0" r="2.3" fill="#10b050"/><circle cx="236.0" cy="12.0" r="3" fill="#000"/><circle cx="243.0" cy="12.0" r="3" fill="#000"/><text x="236.0" y="23.0" font-size="7.5" text-anchor="middle" fill="#c8c8c8" font-family="Liberation Sans" font-weight="bold" textLength="19" lengthAdjust="spacingAndGlyphs">ROUTE</text><circle cx="261.5" cy="18.0" r="9" fill="#3a4a5a" opacity="0.3"/><circle cx="261.5" cy="16.5" r="9.4" fill="#3c3c3c"/><circle cx="261.5" cy="16.5" r="8.2" fill="url(#gpan)"/><rect x="260.9" y="10.5" width="1.3" height="5" fill="#222"/><rect x="275.5" y="8.0" width="18" height="19" fill="#2a4050" opacity="0.25"/><rect x="275.5" y="7.0" width="18" height="19" fill="#505050"/><rect x="276.5" y="8.0" width="16" height="8.5" fill="#fbfbfb"/><rect x="276.5" y="16.5" width="16" height="8.5" fill="#ebecec"/><text x="284.5" y="20.5" font-size="11" font-weight="bold" text-anchor="middle" fill="#5c3a2a" font-family="Liberation Sans">M</text><rect x="293.5" y="8.0" width="18" height="19" fill="#2a4050" opacity="0.25"/><rect x="293.5" y="7.0" width="18" height="19" fill="#505050"/><rect x="294.5" y="8.0" width="16" height="8.5" fill="#fbfbfb"/><rect x="294.5" y="16.5" width="16" height="8.5" fill="#ebecec"/><text x="302.5" y="20.5" font-size="11" font-weight="bold" text-anchor="middle" fill="#6a5838" font-family="Liberation Sans">S</text><rect x="316" y="8.0" width="27.5" height="19" fill="#2a4050" opacity="0.22"/><rect x="316" y="7.0" width="27.5" height="19" fill="#5a4a3c"/><rect x="317" y="8.0" width="15" height="17" fill="#8a9696"/><rect x="332" y="8.0" width="10.5" height="17" fill="#bcc4c4"/><text x="324.5" y="20.5" font-size="10.5" text-anchor="middle" fill="#333b3b" font-family="Liberation Sans" letter-spacing="0.3">FX</text><path d="M335.05 14.4 A3.4 3.4 0 1 0 339.45 14.4" fill="none" stroke="#4a6a80" stroke-width="1"/><line x1="337.25" y1="12.5" x2="337.25" y2="16.5" stroke="#4a6a80" stroke-width="1.2"/><circle cx="355.5" cy="17.5" r="7.5" fill="#4a6070" opacity="0.25"/><circle cx="355.5" cy="16.5" r="7.5" fill="#4a5058"/><circle cx="355.5" cy="16.5" r="6.5" fill="url(#gph)"/><circle cx="355.5" cy="16.5" r="3.0" fill="none" stroke="#4a5260" stroke-width="1"/><line x1="351.5" y1="20.5" x2="359.5" y2="12.5" stroke="#4a5260" stroke-width="1"/><circle cx="355.5" cy="16.5" r="7" fill="#c8a070" opacity="0.45"/><rect x="367" y="7.0" width="42" height="6" fill="#988c78"/><rect x="367" y="13.0" width="42" height="13" fill="#8e8478"/><rect x="369" y="9.0" width="16" height="15" fill="#3c4246"/><rect x="370" y="10.0" width="14" height="13" fill="#acb6b6"/><polyline points="373,18.5 377.5,13.0 381.5,17.5" fill="none" stroke="#444c54" stroke-width="1"/><rect x="371.5" y="17.0" width="3" height="3" fill="#4a4e54"/><rect x="376" y="11.5" width="3" height="3" fill="#4a4e54"/><rect x="380" y="16.0" width="3" height="3" fill="#4a4e54"/><text x="388" y="21.0" font-size="11" fill="#eef2f2" font-family="Liberation Sans">trim</text><clipPath id="ib4137.0"><path d="M413 7.0 H438.5 A9.5 9.5 0 0 1 438.5 26.0 H413 Z"/></clipPath><g clip-path="url(#ib4137.0)"><rect x="413" y="7.0" width="36" height="6" fill="#988c78"/><rect x="413" y="13.0" width="36" height="13" fill="#8e8478"/></g><text x="417.5" y="20.5" font-size="10.5" font-weight="bold" fill="#f0f2f2" font-family="Liberation Sans">IN</text><circle cx="438.5" cy="16.5" r="6.4" fill="none" stroke="#d4dadc" stroke-width="1"/><path d="M435.0 14.5 H442.0 L438.5 19.7 Z" fill="#e8e8b0"/><rect x="452" y="7.0" width="19" height="6" fill="#988c78"/><rect x="452" y="13.0" width="19" height="13" fill="#8e8478"/><rect x="460" y="14.0" width="6" height="5" fill="#d2dce2"/><ellipse cx="459" cy="16.5" rx="1.8" ry="5.3" fill="#8e8478" stroke="#d2dce2" stroke-width="1"/></svg>
<div style="left:31px;top:244px;width:494px;height:1px;background:#262626"></div>
<svg style="left:0;top:245px" width="545" height="37"><defs>
<linearGradient id="gvol" x1="0" y1="0" x2="0" y2="1"><stop offset="0" stop-color="#ffffff"/><stop offset="0.2" stop-color="#eceeee"/><stop offset="0.38" stop-color="#b0b4b4"/><stop offset="0.5" stop-color="#868c8c"/><stop offset="0.62" stop-color="#7e8686"/><stop offset="0.72" stop-color="#9aa0a0"/><stop offset="0.84" stop-color="#687070"/><stop offset="0.95" stop-color="#505858"/><stop offset="1" stop-color="#202048"/></linearGradient>
<linearGradient id="gpan" x1="0" y1="0" x2="0" y2="1"><stop offset="0" stop-color="#e6e6e6"/><stop offset="0.6" stop-color="#dedede"/><stop offset="0.62" stop-color="#c4c8c8"/><stop offset="1" stop-color="#b4b8b8"/></linearGradient>
<linearGradient id="gph" x1="0" y1="0" x2="0" y2="1"><stop offset="0" stop-color="#b8c0c4"/><stop offset="0.5" stop-color="#98a4ac"/><stop offset="1" stop-color="#7a8890"/></linearGradient>
</defs><clipPath id="tc245"><path d="M19 0 H525 V37 H30 L19 26 Z"/></clipPath><g clip-path="url(#tc245)"><rect x="0" y="0" width="525" height="9" fill="#86aacc"/><rect x="0" y="9" width="525" height="13" fill="#7ea4c8"/><rect x="0" y="22" width="525" height="15" fill="#7198bf"/></g><rect x="36" y="7.5" width="174" height="19" rx="2" fill="#333"/><circle cx="36" cy="18.5" r="8.5" fill="#5a6470" opacity="0.45"/><circle cx="36" cy="17" r="9.5" fill="#222"/><clipPath id="rc3617"><circle cx="36" cy="17" r="7.8"/></clipPath><g clip-path="url(#rc3617)"><rect x="26.5" y="7.5" width="19.0" height="10.5" fill="#7e4e38"/><rect x="26.5" y="18" width="19.0" height="9.5" fill="#6a3628"/></g><text x="36" y="21.8" font-size="12.5" text-anchor="middle" fill="#e6d2b4" font-family="Liberation Sans">A</text><text x="48" y="21.5" font-size="12" fill="#cad0d6" font-family="Liberation Sans">K_HZ_01_drums midi</text><circle cx="210.5" cy="18.5" r="9" fill="#3a4a5a" opacity="0.35"/><circle cx="210.5" cy="17" r="9.5" fill="#1e1e1e"/><circle cx="210.5" cy="17" r="8.3" fill="url(#gvol)"/><rect x="209.9" y="11" width="1.3" height="5" fill="#222"/><rect x="224" y="8.5" width="24" height="19" fill="#000" opacity="0.25"/><rect x="224" y="7.5" width="24" height="19" fill="#1c1c1c"/><rect x="225" y="8.5" width="22" height="17" fill="#2e2e2e"/><circle cx="229.0" cy="12.5" r="3" fill="#000"/><circle cx="236.0" cy="12.5" r="3" fill="#000"/><circle cx="236.0" cy="12.5" r="2.3" fill="#a8a820"/><circle cx="243.0" cy="12.5" r="3" fill="#000"/><circle cx="243.0" cy="12.5" r="2.3" fill="#1890c0"/><text x="236.0" y="23.5" font-size="7.5" text-anchor="middle" fill="#c8c8c8" font-family="Liberation Sans" font-weight="bold" textLength="19" lengthAdjust="spacingAndGlyphs">ROUTE</text><circle cx="261.5" cy="18.5" r="9" fill="#3a4a5a" opacity="0.3"/><circle cx="261.5" cy="17" r="9.4" fill="#3c3c3c"/><circle cx="261.5" cy="17" r="8.2" fill="url(#gpan)"/><rect x="260.9" y="11" width="1.3" height="5" fill="#222"/><rect x="275.5" y="8.5" width="18" height="19" fill="#2a4050" opacity="0.25"/><rect x="275.5" y="7.5" width="18" height="19" fill="#505050"/><rect x="276.5" y="8.5" width="16" height="8.5" fill="#fbfbfb"/><rect x="276.5" y="17.0" width="16" height="8.5" fill="#ebecec"/><text x="284.5" y="21.0" font-size="11" font-weight="bold" text-anchor="middle" fill="#5c3a2a" font-family="Liberation Sans">M</text><rect x="293.5" y="8.5" width="18" height="19" fill="#2a4050" opacity="0.25"/><rect x="293.5" y="7.5" width="18" height="19" fill="#505050"/><rect x="294.5" y="8.5" width="16" height="8.5" fill="#fbfbfb"/><rect x="294.5" y="17.0" width="16" height="8.5" fill="#ebecec"/><text x="302.5" y="21.0" font-size="11" font-weight="bold" text-anchor="middle" fill="#6a5838" font-family="Liberation Sans">S</text><rect x="316" y="8.5" width="27.5" height="19" fill="#2a4050" opacity="0.22"/><rect x="316" y="7.5" width="27.5" height="19" fill="#3e4a50"/><rect x="317" y="8.5" width="15" height="17" fill="#22c45a"/><rect x="332" y="8.5" width="10.5" height="17" fill="#bcc4c4"/><text x="324.5" y="21.0" font-size="10.5" text-anchor="middle" fill="#f4fff4" font-family="Liberation Sans" letter-spacing="0.3">FX</text><path d="M335.05 14.9 A3.4 3.4 0 1 0 339.45 14.9" fill="none" stroke="#20a050" stroke-width="1"/><line x1="337.25" y1="13.0" x2="337.25" y2="17.0" stroke="#20a050" stroke-width="1.2"/><circle cx="355.5" cy="18" r="7.5" fill="#4a6070" opacity="0.25"/><circle cx="355.5" cy="17" r="7.5" fill="#4a5058"/><circle cx="355.5" cy="17" r="6.5" fill="url(#gph)"/><circle cx="355.5" cy="17" r="3.0" fill="none" stroke="#4a5260" stroke-width="1"/><line x1="351.5" y1="21" x2="359.5" y2="13" stroke="#4a5260" stroke-width="1"/><rect x="367" y="7.5" width="42" height="6" fill="#7a8c9c"/><rect x="367" y="13.5" width="42" height="13" fill="#7a8a98"/><rect x="369" y="9.5" width="16" height="15" fill="#3c4246"/><rect x="370" y="10.5" width="14" height="13" fill="#acb6b6"/><polyline points="373,19.0 377.5,13.5 381.5,18.0" fill="none" stroke="#444c54" stroke-width="1"/><rect x="371.5" y="17.5" width="3" height="3" fill="#4a4e54"/><rect x="376" y="12.0" width="3" height="3" fill="#4a4e54"/><rect x="380" y="16.5" width="3" height="3" fill="#4a4e54"/><text x="388" y="21.5" font-size="11" fill="#eef2f2" font-family="Liberation Sans">trim</text><clipPath id="ib4137.5"><path d="M413 7.5 H438.5 A9.5 9.5 0 0 1 438.5 26.5 H413 Z"/></clipPath><g clip-path="url(#ib4137.5)"><rect x="413" y="7.5" width="36" height="6" fill="#7a8c9c"/><rect x="413" y="13.5" width="36" height="13" fill="#7a8a98"/></g><text x="417.5" y="21.0" font-size="10.5" font-weight="bold" fill="#f0f2f2" font-family="Liberation Sans">IN</text><circle cx="438.5" cy="17.0" r="6.4" fill="none" stroke="#d4dadc" stroke-width="1"/><path d="M435.0 15.0 H442.0 L438.5 20.2 Z" fill="#c8d4dc"/><rect x="452" y="7.5" width="19" height="6" fill="#7a8c9c"/><rect x="452" y="13.5" width="19" height="13" fill="#7a8a98"/><rect x="460" y="14.5" width="6" height="5" fill="#d2dce2"/><ellipse cx="459" cy="17.0" rx="1.8" ry="5.3" fill="#7a8a98" stroke="#d2dce2" stroke-width="1"/></svg>
<div style="left:30px;top:282px;width:495px;height:1px;background:#262626"></div>
<svg style="left:0;top:283px" width="545" height="23"><defs>
<linearGradient id="gvol" x1="0" y1="0" x2="0" y2="1"><stop offset="0" stop-color="#ffffff"/><stop offset="0.2" stop-color="#eceeee"/><stop offset="0.38" stop-color="#b0b4b4"/><stop offset="0.5" stop-color="#868c8c"/><stop offset="0.62" stop-color="#7e8686"/><stop offset="0.72" stop-color="#9aa0a0"/><stop offset="0.84" stop-color="#687070"/><stop offset="0.95" stop-color="#505858"/><stop offset="1" stop-color="#202048"/></linearGradient>
<linearGradient id="gpan" x1="0" y1="0" x2="0" y2="1"><stop offset="0" stop-color="#e6e6e6"/><stop offset="0.6" stop-color="#dedede"/><stop offset="0.62" stop-color="#c4c8c8"/><stop offset="1" stop-color="#b4b8b8"/></linearGradient>
<linearGradient id="gph" x1="0" y1="0" x2="0" y2="1"><stop offset="0" stop-color="#b8c0c4"/><stop offset="0.5" stop-color="#98a4ac"/><stop offset="1" stop-color="#7a8890"/></linearGradient>
</defs><clipPath id="tc283"><path d="M32 0 H525 V23 H32 L32 23 Z"/></clipPath><g clip-path="url(#tc283)"><rect x="0" y="0" width="525" height="8" fill="#b9c0bf"/><rect x="0" y="8" width="525" height="10" fill="#a5adac"/><rect x="0" y="18" width="525" height="5" fill="#9ca4a3"/></g><rect x="49" y="2.0" width="161" height="19" rx="2" fill="#333"/><circle cx="49" cy="13.0" r="8.5" fill="#5a6470" opacity="0.45"/><circle cx="49" cy="11.5" r="9.5" fill="#222"/><clipPath id="rc4911.5"><circle cx="49" cy="11.5" r="7.8"/></clipPath><g clip-path="url(#rc4911.5)"><rect x="39.5" y="2.0" width="19.0" height="10.5" fill="#7e4e38"/><rect x="39.5" y="12.5" width="19.0" height="9.5" fill="#6a3628"/></g><text x="49" y="16.3" font-size="12.5" text-anchor="middle" fill="#e6d2b4" font-family="Liberation Sans">A</text><text x="61" y="16.0" font-size="12" fill="#cad0d6" font-family="Liberation Sans">Bucket Hits</text><circle cx="210.5" cy="13.0" r="9" fill="#3a4a5a" opacity="0.35"/><circle cx="210.5" cy="11.5" r="9.5" fill="#1e1e1e"/><circle cx="210.5" cy="11.5" r="8.3" fill="url(#gvol)"/><rect x="209.9" y="5.5" width="1.3" height="5" fill="#222"/><rect x="224" y="3.0" width="24" height="19" fill="#000" opacity="0.25"/><rect x="224" y="2.0" width="24" height="19" fill="#1c1c1c"/><rect x="225" y="3.0" width="22" height="17" fill="#2e2e2e"/><circle cx="229.0" cy="7.0" r="3" fill="#000"/><circle cx="229.0" cy="7.0" r="2.3" fill="#10b050"/><circle cx="236.0" cy="7.0" r="3" fill="#000"/><circle cx="243.0" cy="7.0" r="3" fill="#000"/><text x="236.0" y="18.0" font-size="7.5" text-anchor="middle" fill="#c8c8c8" font-family="Liberation Sans" font-weight="bold" textLength="19" lengthAdjust="spacingAndGlyphs">ROUTE</text><circle cx="261.5" cy="13.0" r="9" fill="#3a4a5a" opacity="0.3"/><circle cx="261.5" cy="11.5" r="9.4" fill="#3c3c3c"/><circle cx="261.5" cy="11.5" r="8.2" fill="url(#gpan)"/><rect x="260.9" y="5.5" width="1.3" height="5" fill="#222"/><rect x="275.5" y="3.0" width="18" height="19" fill="#2a4050" opacity="0.25"/><rect x="275.5" y="2.0" width="18" height="19" fill="#505050"/><rect x="276.5" y="3.0" width="16" height="8.5" fill="#fbfbfb"/><rect x="276.5" y="11.5" width="16" height="8.5" fill="#ebecec"/><text x="284.5" y="15.5" font-size="11" font-weight="bold" text-anchor="middle" fill="#5c3a2a" font-family="Liberation Sans">M</text><rect x="293.5" y="3.0" width="18" height="19" fill="#2a4050" opacity="0.25"/><rect x="293.5" y="2.0" width="18" height="19" fill="#505050"/><rect x="294.5" y="3.0" width="16" height="8.5" fill="#fbfbfb"/><rect x="294.5" y="11.5" width="16" height="8.5" fill="#ebecec"/><text x="302.5" y="15.5" font-size="11" font-weight="bold" text-anchor="middle" fill="#6a5838" font-family="Liberation Sans">S</text><rect x="316" y="3.0" width="27.5" height="19" fill="#2a4050" opacity="0.22"/><rect x="316" y="2.0" width="27.5" height="19" fill="#3e4a50"/><rect x="317" y="3.0" width="15" height="17" fill="#8a9696"/><rect x="332" y="3.0" width="10.5" height="17" fill="#bcc4c4"/><text x="324.5" y="15.5" font-size="10.5" text-anchor="middle" fill="#333b3b" font-family="Liberation Sans" letter-spacing="0.3">FX</text><path d="M335.05 9.4 A3.4 3.4 0 1 0 339.45 9.4" fill="none" stroke="#4a6a80" stroke-width="1"/><line x1="337.25" y1="7.5" x2="337.25" y2="11.5" stroke="#4a6a80" stroke-width="1.2"/><circle cx="355.5" cy="12.5" r="7.5" fill="#4a6070" opacity="0.25"/><circle cx="355.5" cy="11.5" r="7.5" fill="#4a5058"/><circle cx="355.5" cy="11.5" r="6.5" fill="url(#gph)"/><circle cx="355.5" cy="11.5" r="3.0" fill="none" stroke="#4a5260" stroke-width="1"/><line x1="351.5" y1="15.5" x2="359.5" y2="7.5" stroke="#4a5260" stroke-width="1"/><rect x="367" y="2.0" width="42" height="6" fill="#858e8d"/><rect x="367" y="8.0" width="42" height="13" fill="#76879a"/><rect x="369" y="4.0" width="16" height="15" fill="#3c4246"/><rect x="370" y="5.0" width="14" height="13" fill="#acb6b6"/><polyline points="373,13.5 377.5,8.0 381.5,12.5" fill="none" stroke="#444c54" stroke-width="1"/><rect x="371.5" y="12.0" width="3" height="3" fill="#4a4e54"/><rect x="376" y="6.5" width="3" height="3" fill="#4a4e54"/><rect x="380" y="11.0" width="3" height="3" fill="#4a4e54"/><text x="388" y="16.0" font-size="11" fill="#eef2f2" font-family="Liberation Sans">trim</text><clipPath id="ib4132.0"><path d="M413 2.0 H438.5 A9.5 9.5 0 0 1 438.5 21.0 H413 Z"/></clipPath><g clip-path="url(#ib4132.0)"><rect x="413" y="2.0" width="36" height="6" fill="#858e8d"/><rect x="413" y="8.0" width="36" height="13" fill="#76879a"/></g><text x="417.5" y="15.5" font-size="10.5" font-weight="bold" fill="#f0f2f2" font-family="Liberation Sans">IN</text><circle cx="438.5" cy="11.5" r="6.4" fill="none" stroke="#d4dadc" stroke-width="1"/><path d="M435.0 9.5 H442.0 L438.5 14.7 Z" fill="#c8d4dc"/><rect x="452" y="2.0" width="19" height="6" fill="#858e8d"/><rect x="452" y="8.0" width="19" height="13" fill="#76879a"/><rect x="460" y="9.0" width="6" height="5" fill="#d2dce2"/><ellipse cx="459" cy="11.5" rx="1.8" ry="5.3" fill="#76879a" stroke="#d2dce2" stroke-width="1"/></svg>
<div style="left:32px;top:306px;width:493px;height:1px;background:#262626"></div>
<svg style="left:0;top:307px" width="545" height="23"><defs>
<linearGradient id="gvol" x1="0" y1="0" x2="0" y2="1"><stop offset="0" stop-color="#ffffff"/><stop offset="0.2" stop-color="#eceeee"/><stop offset="0.38" stop-color="#b0b4b4"/><stop offset="0.5" stop-color="#868c8c"/><stop offset="0.62" stop-color="#7e8686"/><stop offset="0.72" stop-color="#9aa0a0"/><stop offset="0.84" stop-color="#687070"/><stop offset="0.95" stop-color="#505858"/><stop offset="1" stop-color="#202048"/></linearGradient>
<linearGradient id="gpan" x1="0" y1="0" x2="0" y2="1"><stop offset="0" stop-color="#e6e6e6"/><stop offset="0.6" stop-color="#dedede"/><stop offset="0.62" stop-color="#c4c8c8"/><stop offset="1" stop-color="#b4b8b8"/></linearGradient>
<linearGradient id="gph" x1="0" y1="0" x2="0" y2="1"><stop offset="0" stop-color="#b8c0c4"/><stop offset="0.5" stop-color="#98a4ac"/><stop offset="1" stop-color="#7a8890"/></linearGradient>
</defs><clipPath id="tc307"><path d="M32 0 H525 V23 H32 L32 23 Z"/></clipPath><g clip-path="url(#tc307)"><rect x="0" y="0" width="525" height="8" fill="#b9c0bf"/><rect x="0" y="8" width="525" height="10" fill="#a5adac"/><rect x="0" y="18" width="525" height="5" fill="#9ca4a3"/></g><rect x="49" y="2.0" width="161" height="19" rx="2" fill="#333"/><circle cx="49" cy="13.0" r="8.5" fill="#5a6470" opacity="0.45"/><circle cx="49" cy="11.5" r="9.5" fill="#222"/><clipPath id="rc4911.5"><circle cx="49" cy="11.5" r="7.8"/></clipPath><g clip-path="url(#rc4911.5)"><rect x="39.5" y="2.0" width="19.0" height="10.5" fill="#7e4e38"/><rect x="39.5" y="12.5" width="19.0" height="9.5" fill="#6a3628"/></g><text x="49" y="16.3" font-size="12.5" text-anchor="middle" fill="#e6d2b4" font-family="Liberation Sans">A</text><text x="61" y="16.0" font-size="12" fill="#cad0d6" font-family="Liberation Sans">Exotic Hits bombos</text><circle cx="210.5" cy="13.0" r="9" fill="#3a4a5a" opacity="0.35"/><circle cx="210.5" cy="11.5" r="9.5" fill="#1e1e1e"/><circle cx="210.5" cy="11.5" r="8.3" fill="url(#gvol)"/><rect x="209.9" y="5.5" width="1.3" height="5" fill="#222"/><rect x="224" y="3.0" width="24" height="19" fill="#000" opacity="0.25"/><rect x="224" y="2.0" width="24" height="19" fill="#1c1c1c"/><rect x="225" y="3.0" width="22" height="17" fill="#2e2e2e"/><circle cx="229.0" cy="7.0" r="3" fill="#000"/><circle cx="229.0" cy="7.0" r="2.3" fill="#10b050"/><circle cx="236.0" cy="7.0" r="3" fill="#000"/><circle cx="243.0" cy="7.0" r="3" fill="#000"/><circle cx="243.0" cy="7.0" r="2.3" fill="#1890c0"/><text x="236.0" y="18.0" font-size="7.5" text-anchor="middle" fill="#c8c8c8" font-family="Liberation Sans" font-weight="bold" textLength="19" lengthAdjust="spacingAndGlyphs">ROUTE</text><circle cx="261.5" cy="13.0" r="9" fill="#3a4a5a" opacity="0.3"/><circle cx="261.5" cy="11.5" r="9.4" fill="#3c3c3c"/><circle cx="261.5" cy="11.5" r="8.2" fill="url(#gpan)"/><rect x="260.9" y="5.5" width="1.3" height="5" fill="#222"/><rect x="275.5" y="3.0" width="18" height="19" fill="#2a4050" opacity="0.25"/><rect x="275.5" y="2.0" width="18" height="19" fill="#505050"/><rect x="276.5" y="3.0" width="16" height="8.5" fill="#fbfbfb"/><rect x="276.5" y="11.5" width="16" height="8.5" fill="#ebecec"/><text x="284.5" y="15.5" font-size="11" font-weight="bold" text-anchor="middle" fill="#5c3a2a" font-family="Liberation Sans">M</text><rect x="293.5" y="3.0" width="18" height="19" fill="#2a4050" opacity="0.25"/><rect x="293.5" y="2.0" width="18" height="19" fill="#505050"/><rect x="294.5" y="3.0" width="16" height="8.5" fill="#fbfbfb"/><rect x="294.5" y="11.5" width="16" height="8.5" fill="#ebecec"/><text x="302.5" y="15.5" font-size="11" font-weight="bold" text-anchor="middle" fill="#6a5838" font-family="Liberation Sans">S</text><rect x="316" y="3.0" width="27.5" height="19" fill="#2a4050" opacity="0.22"/><rect x="316" y="2.0" width="27.5" height="19" fill="#3e4a50"/><rect x="317" y="3.0" width="15" height="17" fill="#8a9696"/><rect x="332" y="3.0" width="10.5" height="17" fill="#bcc4c4"/><text x="324.5" y="15.5" font-size="10.5" text-anchor="middle" fill="#333b3b" font-family="Liberation Sans" letter-spacing="0.3">FX</text><path d="M335.05 9.4 A3.4 3.4 0 1 0 339.45 9.4" fill="none" stroke="#4a6a80" stroke-width="1"/><line x1="337.25" y1="7.5" x2="337.25" y2="11.5" stroke="#4a6a80" stroke-width="1.2"/><circle cx="355.5" cy="12.5" r="7.5" fill="#4a6070" opacity="0.25"/><circle cx="355.5" cy="11.5" r="7.5" fill="#4a5058"/><circle cx="355.5" cy="11.5" r="6.5" fill="url(#gph)"/><circle cx="355.5" cy="11.5" r="3.0" fill="none" stroke="#4a5260" stroke-width="1"/><line x1="351.5" y1="15.5" x2="359.5" y2="7.5" stroke="#4a5260" stroke-width="1"/><rect x="367" y="2.0" width="42" height="6" fill="#858e8d"/><rect x="367" y="8.0" width="42" height="13" fill="#76879a"/><rect x="369" y="4.0" width="16" height="15" fill="#3c4246"/><rect x="370" y="5.0" width="14" height="13" fill="#acb6b6"/><polyline points="373,13.5 377.5,8.0 381.5,12.5" fill="none" stroke="#444c54" stroke-width="1"/><rect x="371.5" y="12.0" width="3" height="3" fill="#4a4e54"/><rect x="376" y="6.5" width="3" height="3" fill="#4a4e54"/><rect x="380" y="11.0" width="3" height="3" fill="#4a4e54"/><text x="388" y="16.0" font-size="11" fill="#eef2f2" font-family="Liberation Sans">trim</text><clipPath id="ib4132.0"><path d="M413 2.0 H438.5 A9.5 9.5 0 0 1 438.5 21.0 H413 Z"/></clipPath><g clip-path="url(#ib4132.0)"><rect x="413" y="2.0" width="36" height="6" fill="#858e8d"/><rect x="413" y="8.0" width="36" height="13" fill="#76879a"/></g><text x="417.5" y="15.5" font-size="10.5" font-weight="bold" fill="#f0f2f2" font-family="Liberation Sans">IN</text><circle cx="438.5" cy="11.5" r="6.4" fill="none" stroke="#d4dadc" stroke-width="1"/><path d="M435.0 9.5 H442.0 L438.5 14.7 Z" fill="#c8d4dc"/><rect x="452" y="2.0" width="19" height="6" fill="#858e8d"/><rect x="452" y="8.0" width="19" height="13" fill="#76879a"/><rect x="460" y="9.0" width="6" height="5" fill="#d2dce2"/><ellipse cx="459" cy="11.5" rx="1.8" ry="5.3" fill="#76879a" stroke="#d2dce2" stroke-width="1"/></svg>
<div style="left:32px;top:330px;width:493px;height:1px;background:#262626"></div>
<svg style="left:0;top:331px" width="545" height="23"><defs>
<linearGradient id="gvol" x1="0" y1="0" x2="0" y2="1"><stop offset="0" stop-color="#ffffff"/><stop offset="0.2" stop-color="#eceeee"/><stop offset="0.38" stop-color="#b0b4b4"/><stop offset="0.5" stop-color="#868c8c"/><stop offset="0.62" stop-color="#7e8686"/><stop offset="0.72" stop-color="#9aa0a0"/><stop offset="0.84" stop-color="#687070"/><stop offset="0.95" stop-color="#505858"/><stop offset="1" stop-color="#202048"/></linearGradient>
<linearGradient id="gpan" x1="0" y1="0" x2="0" y2="1"><stop offset="0" stop-color="#e6e6e6"/><stop offset="0.6" stop-color="#dedede"/><stop offset="0.62" stop-color="#c4c8c8"/><stop offset="1" stop-color="#b4b8b8"/></linearGradient>
<linearGradient id="gph" x1="0" y1="0" x2="0" y2="1"><stop offset="0" stop-color="#b8c0c4"/><stop offset="0.5" stop-color="#98a4ac"/><stop offset="1" stop-color="#7a8890"/></linearGradient>
</defs><clipPath id="tc331"><path d="M32 0 H525 V23 H32 L32 23 Z"/></clipPath><g clip-path="url(#tc331)"><rect x="0" y="0" width="525" height="8" fill="#b9c0bf"/><rect x="0" y="8" width="525" height="10" fill="#a5adac"/><rect x="0" y="18" width="525" height="5" fill="#9ca4a3"/></g><rect x="49" y="2.0" width="161" height="19" rx="2" fill="#333"/><circle cx="49" cy="13.0" r="8.5" fill="#5a6470" opacity="0.45"/><circle cx="49" cy="11.5" r="9.5" fill="#222"/><clipPath id="rc4911.5"><circle cx="49" cy="11.5" r="7.8"/></clipPath><g clip-path="url(#rc4911.5)"><rect x="39.5" y="2.0" width="19.0" height="10.5" fill="#7e4e38"/><rect x="39.5" y="12.5" width="19.0" height="9.5" fill="#6a3628"/></g><text x="49" y="16.3" font-size="12.5" text-anchor="middle" fill="#e6d2b4" font-family="Liberation Sans">A</text><text x="61" y="16.0" font-size="12" fill="#cad0d6" font-family="Liberation Sans">Exotic Hits boobams</text><circle cx="210.5" cy="13.0" r="9" fill="#3a4a5a" opacity="0.35"/><circle cx="210.5" cy="11.5" r="9.5" fill="#1e1e1e"/><circle cx="210.5" cy="11.5" r="8.3" fill="url(#gvol)"/><rect x="209.9" y="5.5" width="1.3" height="5" fill="#222"/><rect x="224" y="3.0" width="24" height="19" fill="#000" opacity="0.25"/><rect x="224" y="2.0" width="24" height="19" fill="#1c1c1c"/><rect x="225" y="3.0" width="22" height="17" fill="#2e2e2e"/><circle cx="229.0" cy="7.0" r="3" fill="#000"/><circle cx="229.0" cy="7.0" r="2.3" fill="#10b050"/><circle cx="236.0" cy="7.0" r="3" fill="#000"/><circle cx="243.0" cy="7.0" r="3" fill="#000"/><circle cx="243.0" cy="7.0" r="2.3" fill="#1890c0"/><text x="236.0" y="18.0" font-size="7.5" text-anchor="middle" fill="#c8c8c8" font-family="Liberation Sans" font-weight="bold" textLength="19" lengthAdjust="spacingAndGlyphs">ROUTE</text><circle cx="261.5" cy="13.0" r="9" fill="#3a4a5a" opacity="0.3"/><circle cx="261.5" cy="11.5" r="9.4" fill="#3c3c3c"/><circle cx="261.5" cy="11.5" r="8.2" fill="url(#gpan)"/><rect x="260.9" y="5.5" width="1.3" height="5" fill="#222"/><rect x="275.5" y="3.0" width="18" height="19" fill="#2a4050" opacity="0.25"/><rect x="275.5" y="2.0" width="18" height="19" fill="#505050"/><rect x="276.5" y="3.0" width="16" height="8.5" fill="#fbfbfb"/><rect x="276.5" y="11.5" width="16" height="8.5" fill="#ebecec"/><text x="284.5" y="15.5" font-size="11" font-weight="bold" text-anchor="middle" fill="#5c3a2a" font-family="Liberation Sans">M</text><rect x="293.5" y="3.0" width="18" height="19" fill="#2a4050" opacity="0.25"/><rect x="293.5" y="2.0" width="18" height="19" fill="#505050"/><rect x="294.5" y="3.0" width="16" height="8.5" fill="#fbfbfb"/><rect x="294.5" y="11.5" width="16" height="8.5" fill="#ebecec"/><text x="302.5" y="15.5" font-size="11" font-weight="bold" text-anchor="middle" fill="#6a5838" font-family="Liberation Sans">S</text><rect x="316" y="3.0" width="27.5" height="19" fill="#2a4050" opacity="0.22"/><rect x="316" y="2.0" width="27.5" height="19" fill="#3e4a50"/><rect x="317" y="3.0" width="15" height="17" fill="#8a9696"/><rect x="332" y="3.0" width="10.5" height="17" fill="#bcc4c4"/><text x="324.5" y="15.5" font-size="10.5" text-anchor="middle" fill="#333b3b" font-family="Liberation Sans" letter-spacing="0.3">FX</text><path d="M335.05 9.4 A3.4 3.4 0 1 0 339.45 9.4" fill="none" stroke="#4a6a80" stroke-width="1"/><line x1="337.25" y1="7.5" x2="337.25" y2="11.5" stroke="#4a6a80" stroke-width="1.2"/><circle cx="355.5" cy="12.5" r="7.5" fill="#4a6070" opacity="0.25"/><circle cx="355.5" cy="11.5" r="7.5" fill="#4a5058"/><circle cx="355.5" cy="11.5" r="6.5" fill="url(#gph)"/><circle cx="355.5" cy="11.5" r="3.0" fill="none" stroke="#4a5260" stroke-width="1"/><line x1="351.5" y1="15.5" x2="359.5" y2="7.5" stroke="#4a5260" stroke-width="1"/><rect x="367" y="2.0" width="42" height="6" fill="#858e8d"/><rect x="367" y="8.0" width="42" height="13" fill="#76879a"/><rect x="369" y="4.0" width="16" height="15" fill="#3c4246"/><rect x="370" y="5.0" width="14" height="13" fill="#acb6b6"/><polyline points="373,13.5 377.5,8.0 381.5,12.5" fill="none" stroke="#444c54" stroke-width="1"/><rect x="371.5" y="12.0" width="3" height="3" fill="#4a4e54"/><rect x="376" y="6.5" width="3" height="3" fill="#4a4e54"/><rect x="380" y="11.0" width="3" height="3" fill="#4a4e54"/><text x="388" y="16.0" font-size="11" fill="#eef2f2" font-family="Liberation Sans">trim</text><clipPath id="ib4132.0"><path d="M413 2.0 H438.5 A9.5 9.5 0 0 1 438.5 21.0 H413 Z"/></clipPath><g clip-path="url(#ib4132.0)"><rect x="413" y="2.0" width="36" height="6" fill="#858e8d"/><rect x="413" y="8.0" width="36" height="13" fill="#76879a"/></g><text x="417.5" y="15.5" font-size="10.5" font-weight="bold" fill="#f0f2f2" font-family="Liberation Sans">IN</text><circle cx="438.5" cy="11.5" r="6.4" fill="none" stroke="#d4dadc" stroke-width="1"/><path d="M435.0 9.5 H442.0 L438.5 14.7 Z" fill="#c8d4dc"/><rect x="452" y="2.0" width="19" height="6" fill="#858e8d"/><rect x="452" y="8.0" width="19" height="13" fill="#76879a"/><rect x="460" y="9.0" width="6" height="5" fill="#d2dce2"/><ellipse cx="459" cy="11.5" rx="1.8" ry="5.3" fill="#76879a" stroke="#d2dce2" stroke-width="1"/></svg>
<div style="left:32px;top:354px;width:493px;height:1px;background:#262626"></div>
<svg style="left:0;top:355px" width="545" height="23"><defs>
<linearGradient id="gvol" x1="0" y1="0" x2="0" y2="1"><stop offset="0" stop-color="#ffffff"/><stop offset="0.2" stop-color="#eceeee"/><stop offset="0.38" stop-color="#b0b4b4"/><stop offset="0.5" stop-color="#868c8c"/><stop offset="0.62" stop-color="#7e8686"/><stop offset="0.72" stop-color="#9aa0a0"/><stop offset="0.84" stop-color="#687070"/><stop offset="0.95" stop-color="#505858"/><stop offset="1" stop-color="#202048"/></linearGradient>
<linearGradient id="gpan" x1="0" y1="0" x2="0" y2="1"><stop offset="0" stop-color="#e6e6e6"/><stop offset="0.6" stop-color="#dedede"/><stop offset="0.62" stop-color="#c4c8c8"/><stop offset="1" stop-color="#b4b8b8"/></linearGradient>
<linearGradient id="gph" x1="0" y1="0" x2="0" y2="1"><stop offset="0" stop-color="#b8c0c4"/><stop offset="0.5" stop-color="#98a4ac"/><stop offset="1" stop-color="#7a8890"/></linearGradient>
</defs><clipPath id="tc355"><path d="M32 0 H525 V23 H32 L32 23 Z"/></clipPath><g clip-path="url(#tc355)"><rect x="0" y="0" width="525" height="8" fill="#b9c0bf"/><rect x="0" y="8" width="525" height="10" fill="#a5adac"/><rect x="0" y="18" width="525" height="5" fill="#9ca4a3"/></g><rect x="49" y="2.0" width="161" height="19" rx="2" fill="#333"/><circle cx="49" cy="13.0" r="8.5" fill="#5a6470" opacity="0.45"/><circle cx="49" cy="11.5" r="9.5" fill="#222"/><clipPath id="rc4911.5"><circle cx="49" cy="11.5" r="7.8"/></clipPath><g clip-path="url(#rc4911.5)"><rect x="39.5" y="2.0" width="19.0" height="10.5" fill="#7e4e38"/><rect x="39.5" y="12.5" width="19.0" height="9.5" fill="#6a3628"/></g><text x="49" y="16.3" font-size="12.5" text-anchor="middle" fill="#e6d2b4" font-family="Liberation Sans">A</text><text x="61" y="16.0" font-size="12" fill="#cad0d6" font-family="Liberation Sans">Exotic Hits tombeks</text><circle cx="210.5" cy="13.0" r="9" fill="#3a4a5a" opacity="0.35"/><circle cx="210.5" cy="11.5" r="9.5" fill="#1e1e1e"/><circle cx="210.5" cy="11.5" r="8.3" fill="url(#gvol)"/><rect x="209.9" y="5.5" width="1.3" height="5" fill="#222"/><rect x="224" y="3.0" width="24" height="19" fill="#000" opacity="0.25"/><rect x="224" y="2.0" width="24" height="19" fill="#1c1c1c"/><rect x="225" y="3.0" width="22" height="17" fill="#2e2e2e"/><circle cx="229.0" cy="7.0" r="3" fill="#000"/><circle cx="229.0" cy="7.0" r="2.3" fill="#10b050"/><circle cx="236.0" cy="7.0" r="3" fill="#000"/><circle cx="243.0" cy="7.0" r="3" fill="#000"/><circle cx="243.0" cy="7.0" r="2.3" fill="#1890c0"/><text x="236.0" y="18.0" font-size="7.5" text-anchor="middle" fill="#c8c8c8" font-family="Liberation Sans" font-weight="bold" textLength="19" lengthAdjust="spacingAndGlyphs">ROUTE</text><circle cx="261.5" cy="13.0" r="9" fill="#3a4a5a" opacity="0.3"/><circle cx="261.5" cy="11.5" r="9.4" fill="#3c3c3c"/><circle cx="261.5" cy="11.5" r="8.2" fill="url(#gpan)"/><rect x="260.9" y="5.5" width="1.3" height="5" fill="#222"/><rect x="275.5" y="3.0" width="18" height="19" fill="#2a4050" opacity="0.25"/><rect x="275.5" y="2.0" width="18" height="19" fill="#505050"/><rect x="276.5" y="3.0" width="16" height="8.5" fill="#fbfbfb"/><rect x="276.5" y="11.5" width="16" height="8.5" fill="#ebecec"/><text x="284.5" y="15.5" font-size="11" font-weight="bold" text-anchor="middle" fill="#5c3a2a" font-family="Liberation Sans">M</text><rect x="293.5" y="3.0" width="18" height="19" fill="#2a4050" opacity="0.25"/><rect x="293.5" y="2.0" width="18" height="19" fill="#505050"/><rect x="294.5" y="3.0" width="16" height="8.5" fill="#fbfbfb"/><rect x="294.5" y="11.5" width="16" height="8.5" fill="#ebecec"/><text x="302.5" y="15.5" font-size="11" font-weight="bold" text-anchor="middle" fill="#6a5838" font-family="Liberation Sans">S</text><rect x="316" y="3.0" width="27.5" height="19" fill="#2a4050" opacity="0.22"/><rect x="316" y="2.0" width="27.5" height="19" fill="#3e4a50"/><rect x="317" y="3.0" width="15" height="17" fill="#8a9696"/><rect x="332" y="3.0" width="10.5" height="17" fill="#bcc4c4"/><text x="324.5" y="15.5" font-size="10.5" text-anchor="middle" fill="#333b3b" font-family="Liberation Sans" letter-spacing="0.3">FX</text><path d="M335.05 9.4 A3.4 3.4 0 1 0 339.45 9.4" fill="none" stroke="#4a6a80" stroke-width="1"/><line x1="337.25" y1="7.5" x2="337.25" y2="11.5" stroke="#4a6a80" stroke-width="1.2"/><circle cx="355.5" cy="12.5" r="7.5" fill="#4a6070" opacity="0.25"/><circle cx="355.5" cy="11.5" r="7.5" fill="#4a5058"/><circle cx="355.5" cy="11.5" r="6.5" fill="url(#gph)"/><circle cx="355.5" cy="11.5" r="3.0" fill="none" stroke="#4a5260" stroke-width="1"/><line x1="351.5" y1="15.5" x2="359.5" y2="7.5" stroke="#4a5260" stroke-width="1"/><rect x="367" y="2.0" width="42" height="6" fill="#858e8d"/><rect x="367" y="8.0" width="42" height="13" fill="#76879a"/><rect x="369" y="4.0" width="16" height="15" fill="#3c4246"/><rect x="370" y="5.0" width="14" height="13" fill="#acb6b6"/><polyline points="373,13.5 377.5,8.0 381.5,12.5" fill="none" stroke="#444c54" stroke-width="1"/><rect x="371.5" y="12.0" width="3" height="3" fill="#4a4e54"/><rect x="376" y="6.5" width="3" height="3" fill="#4a4e54"/><rect x="380" y="11.0" width="3" height="3" fill="#4a4e54"/><text x="388" y="16.0" font-size="11" fill="#eef2f2" font-family="Liberation Sans">trim</text><clipPath id="ib4132.0"><path d="M413 2.0 H438.5 A9.5 9.5 0 0 1 438.5 21.0 H413 Z"/></clipPath><g clip-path="url(#ib4132.0)"><rect x="413" y="2.0" width="36" height="6" fill="#858e8d"/><rect x="413" y="8.0" width="36" height="13" fill="#76879a"/></g><text x="417.5" y="15.5" font-size="10.5" font-weight="bold" fill="#f0f2f2" font-family="Liberation Sans">IN</text><circle cx="438.5" cy="11.5" r="6.4" fill="none" stroke="#d4dadc" stroke-width="1"/><path d="M435.0 9.5 H442.0 L438.5 14.7 Z" fill="#c8d4dc"/><rect x="452" y="2.0" width="19" height="6" fill="#858e8d"/><rect x="452" y="8.0" width="19" height="13" fill="#76879a"/><rect x="460" y="9.0" width="6" height="5" fill="#d2dce2"/><ellipse cx="459" cy="11.5" rx="1.8" ry="5.3" fill="#76879a" stroke="#d2dce2" stroke-width="1"/></svg>
<div style="left:32px;top:378px;width:493px;height:1px;background:#262626"></div>
<svg style="left:0;top:379px" width="545" height="23"><defs>
<linearGradient id="gvol" x1="0" y1="0" x2="0" y2="1"><stop offset="0" stop-color="#ffffff"/><stop offset="0.2" stop-color="#eceeee"/><stop offset="0.38" stop-color="#b0b4b4"/><stop offset="0.5" stop-color="#868c8c"/><stop offset="0.62" stop-color="#7e8686"/><stop offset="0.72" stop-color="#9aa0a0"/><stop offset="0.84" stop-color="#687070"/><stop offset="0.95" stop-color="#505858"/><stop offset="1" stop-color="#202048"/></linearGradient>
<linearGradient id="gpan" x1="0" y1="0" x2="0" y2="1"><stop offset="0" stop-color="#e6e6e6"/><stop offset="0.6" stop-color="#dedede"/><stop offset="0.62" stop-color="#c4c8c8"/><stop offset="1" stop-color="#b4b8b8"/></linearGradient>
<linearGradient id="gph" x1="0" y1="0" x2="0" y2="1"><stop offset="0" stop-color="#b8c0c4"/><stop offset="0.5" stop-color="#98a4ac"/><stop offset="1" stop-color="#7a8890"/></linearGradient>
</defs><clipPath id="tc379"><path d="M32 0 H525 V23 H32 L32 23 Z"/></clipPath><g clip-path="url(#tc379)"><rect x="0" y="0" width="525" height="8" fill="#b9c0bf"/><rect x="0" y="8" width="525" height="10" fill="#a5adac"/><rect x="0" y="18" width="525" height="5" fill="#9ca4a3"/></g><rect x="49" y="2.0" width="161" height="19" rx="2" fill="#333"/><circle cx="49" cy="13.0" r="8.5" fill="#5a6470" opacity="0.45"/><circle cx="49" cy="11.5" r="9.5" fill="#222"/><clipPath id="rc4911.5"><circle cx="49" cy="11.5" r="7.8"/></clipPath><g clip-path="url(#rc4911.5)"><rect x="39.5" y="2.0" width="19.0" height="10.5" fill="#7e4e38"/><rect x="39.5" y="12.5" width="19.0" height="9.5" fill="#6a3628"/></g><text x="49" y="16.3" font-size="12.5" text-anchor="middle" fill="#e6d2b4" font-family="Liberation Sans">A</text><text x="61" y="16.0" font-size="12" fill="#cad0d6" font-family="Liberation Sans">Metal Hits gong galery</text><circle cx="210.5" cy="13.0" r="9" fill="#3a4a5a" opacity="0.35"/><circle cx="210.5" cy="11.5" r="9.5" fill="#1e1e1e"/><circle cx="210.5" cy="11.5" r="8.3" fill="url(#gvol)"/><rect x="209.9" y="5.5" width="1.3" height="5" fill="#222"/><rect x="224" y="3.0" width="24" height="19" fill="#000" opacity="0.25"/><rect x="224" y="2.0" width="24" height="19" fill="#1c1c1c"/><rect x="225" y="3.0" width="22" height="17" fill="#2e2e2e"/><circle cx="229.0" cy="7.0" r="3" fill="#000"/><circle cx="229.0" cy="7.0" r="2.3" fill="#10b050"/><circle cx="236.0" cy="7.0" r="3" fill="#000"/><circle cx="243.0" cy="7.0" r="3" fill="#000"/><circle cx="243.0" cy="7.0" r="2.3" fill="#1890c0"/><text x="236.0" y="18.0" font-size="7.5" text-anchor="middle" fill="#c8c8c8" font-family="Liberation Sans" font-weight="bold" textLength="19" lengthAdjust="spacingAndGlyphs">ROUTE</text><circle cx="261.5" cy="13.0" r="9" fill="#3a4a5a" opacity="0.3"/><circle cx="261.5" cy="11.5" r="9.4" fill="#3c3c3c"/><circle cx="261.5" cy="11.5" r="8.2" fill="url(#gpan)"/><rect x="260.9" y="5.5" width="1.3" height="5" fill="#222"/><rect x="275.5" y="3.0" width="18" height="19" fill="#2a4050" opacity="0.25"/><rect x="275.5" y="2.0" width="18" height="19" fill="#505050"/><rect x="276.5" y="3.0" width="16" height="8.5" fill="#fbfbfb"/><rect x="276.5" y="11.5" width="16" height="8.5" fill="#ebecec"/><text x="284.5" y="15.5" font-size="11" font-weight="bold" text-anchor="middle" fill="#5c3a2a" font-family="Liberation Sans">M</text><rect x="293.5" y="3.0" width="18" height="19" fill="#2a4050" opacity="0.25"/><rect x="293.5" y="2.0" width="18" height="19" fill="#505050"/><rect x="294.5" y="3.0" width="16" height="8.5" fill="#fbfbfb"/><rect x="294.5" y="11.5" width="16" height="8.5" fill="#ebecec"/><text x="302.5" y="15.5" font-size="11" font-weight="bold" text-anchor="middle" fill="#6a5838" font-family="Liberation Sans">S</text><rect x="316" y="3.0" width="27.5" height="19" fill="#2a4050" opacity="0.22"/><rect x="316" y="2.0" width="27.5" height="19" fill="#3e4a50"/><rect x="317" y="3.0" width="15" height="17" fill="#8a9696"/><rect x="332" y="3.0" width="10.5" height="17" fill="#bcc4c4"/><text x="324.5" y="15.5" font-size="10.5" text-anchor="middle" fill="#333b3b" font-family="Liberation Sans" letter-spacing="0.3">FX</text><path d="M335.05 9.4 A3.4 3.4 0 1 0 339.45 9.4" fill="none" stroke="#4a6a80" stroke-width="1"/><line x1="337.25" y1="7.5" x2="337.25" y2="11.5" stroke="#4a6a80" stroke-width="1.2"/><circle cx="355.5" cy="12.5" r="7.5" fill="#4a6070" opacity="0.25"/><circle cx="355.5" cy="11.5" r="7.5" fill="#4a5058"/><circle cx="355.5" cy="11.5" r="6.5" fill="url(#gph)"/><circle cx="355.5" cy="11.5" r="3.0" fill="none" stroke="#4a5260" stroke-width="1"/><line x1="351.5" y1="15.5" x2="359.5" y2="7.5" stroke="#4a5260" stroke-width="1"/><rect x="367" y="2.0" width="42" height="6" fill="#858e8d"/><rect x="367" y="8.0" width="42" height="13" fill="#76879a"/><rect x="369" y="4.0" width="16" height="15" fill="#3c4246"/><rect x="370" y="5.0" width="14" height="13" fill="#acb6b6"/><polyline points="373,13.5 377.5,8.0 381.5,12.5" fill="none" stroke="#444c54" stroke-width="1"/><rect x="371.5" y="12.0" width="3" height="3" fill="#4a4e54"/><rect x="376" y="6.5" width="3" height="3" fill="#4a4e54"/><rect x="380" y="11.0" width="3" height="3" fill="#4a4e54"/><text x="388" y="16.0" font-size="11" fill="#eef2f2" font-family="Liberation Sans">trim</text><clipPath id="ib4132.0"><path d="M413 2.0 H438.5 A9.5 9.5 0 0 1 438.5 21.0 H413 Z"/></clipPath><g clip-path="url(#ib4132.0)"><rect x="413" y="2.0" width="36" height="6" fill="#858e8d"/><rect x="413" y="8.0" width="36" height="13" fill="#76879a"/></g><text x="417.5" y="15.5" font-size="10.5" font-weight="bold" fill="#f0f2f2" font-family="Liberation Sans">IN</text><circle cx="438.5" cy="11.5" r="6.4" fill="none" stroke="#d4dadc" stroke-width="1"/><path d="M435.0 9.5 H442.0 L438.5 14.7 Z" fill="#c8d4dc"/><rect x="452" y="2.0" width="19" height="6" fill="#858e8d"/><rect x="452" y="8.0" width="19" height="13" fill="#76879a"/><rect x="460" y="9.0" width="6" height="5" fill="#d2dce2"/><ellipse cx="459" cy="11.5" rx="1.8" ry="5.3" fill="#76879a" stroke="#d2dce2" stroke-width="1"/></svg>
<div style="left:32px;top:402px;width:493px;height:1px;background:#262626"></div>
<svg style="left:0;top:403px" width="545" height="23"><defs>
<linearGradient id="gvol" x1="0" y1="0" x2="0" y2="1"><stop offset="0" stop-color="#ffffff"/><stop offset="0.2" stop-color="#eceeee"/><stop offset="0.38" stop-color="#b0b4b4"/><stop offset="0.5" stop-color="#868c8c"/><stop offset="0.62" stop-color="#7e8686"/><stop offset="0.72" stop-color="#9aa0a0"/><stop offset="0.84" stop-color="#687070"/><stop offset="0.95" stop-color="#505858"/><stop offset="1" stop-color="#202048"/></linearGradient>
<linearGradient id="gpan" x1="0" y1="0" x2="0" y2="1"><stop offset="0" stop-color="#e6e6e6"/><stop offset="0.6" stop-color="#dedede"/><stop offset="0.62" stop-color="#c4c8c8"/><stop offset="1" stop-color="#b4b8b8"/></linearGradient>
<linearGradient id="gph" x1="0" y1="0" x2="0" y2="1"><stop offset="0" stop-color="#b8c0c4"/><stop offset="0.5" stop-color="#98a4ac"/><stop offset="1" stop-color="#7a8890"/></linearGradient>
</defs><clipPath id="tc403"><path d="M32 0 H525 V23 H32 L32 23 Z"/></clipPath><g clip-path="url(#tc403)"><rect x="0" y="0" width="525" height="8" fill="#b9c0bf"/><rect x="0" y="8" width="525" height="10" fill="#a5adac"/><rect x="0" y="18" width="525" height="5" fill="#9ca4a3"/></g><rect x="49" y="2.0" width="161" height="19" rx="2" fill="#333"/><circle cx="49" cy="13.0" r="8.5" fill="#5a6470" opacity="0.45"/><circle cx="49" cy="11.5" r="9.5" fill="#222"/><clipPath id="rc4911.5"><circle cx="49" cy="11.5" r="7.8"/></clipPath><g clip-path="url(#rc4911.5)"><rect x="39.5" y="2.0" width="19.0" height="10.5" fill="#7e4e38"/><rect x="39.5" y="12.5" width="19.0" height="9.5" fill="#6a3628"/></g><text x="49" y="16.3" font-size="12.5" text-anchor="middle" fill="#e6d2b4" font-family="Liberation Sans">A</text><text x="61" y="16.0" font-size="12" fill="#cad0d6" font-family="Liberation Sans">Taiko Hits ensemble</text><circle cx="210.5" cy="13.0" r="9" fill="#3a4a5a" opacity="0.35"/><circle cx="210.5" cy="11.5" r="9.5" fill="#1e1e1e"/><circle cx="210.5" cy="11.5" r="8.3" fill="url(#gvol)"/><rect x="209.9" y="5.5" width="1.3" height="5" fill="#222"/><rect x="224" y="3.0" width="24" height="19" fill="#000" opacity="0.25"/><rect x="224" y="2.0" width="24" height="19" fill="#1c1c1c"/><rect x="225" y="3.0" width="22" height="17" fill="#2e2e2e"/><circle cx="229.0" cy="7.0" r="3" fill="#000"/><circle cx="229.0" cy="7.0" r="2.3" fill="#10b050"/><circle cx="236.0" cy="7.0" r="3" fill="#000"/><circle cx="243.0" cy="7.0" r="3" fill="#000"/><circle cx="243.0" cy="7.0" r="2.3" fill="#1890c0"/><text x="236.0" y="18.0" font-size="7.5" text-anchor="middle" fill="#c8c8c8" font-family="Liberation Sans" font-weight="bold" textLength="19" lengthAdjust="spacingAndGlyphs">ROUTE</text><circle cx="261.5" cy="13.0" r="9" fill="#3a4a5a" opacity="0.3"/><circle cx="261.5" cy="11.5" r="9.4" fill="#3c3c3c"/><circle cx="261.5" cy="11.5" r="8.2" fill="url(#gpan)"/><rect x="260.9" y="5.5" width="1.3" height="5" fill="#222"/><rect x="275.5" y="3.0" width="18" height="19" fill="#2a4050" opacity="0.25"/><rect x="275.5" y="2.0" width="18" height="19" fill="#505050"/><rect x="276.5" y="3.0" width="16" height="8.5" fill="#fbfbfb"/><rect x="276.5" y="11.5" width="16" height="8.5" fill="#ebecec"/><text x="284.5" y="15.5" font-size="11" font-weight="bold" text-anchor="middle" fill="#5c3a2a" font-family="Liberation Sans">M</text><rect x="293.5" y="3.0" width="18" height="19" fill="#2a4050" opacity="0.25"/><rect x="293.5" y="2.0" width="18" height="19" fill="#505050"/><rect x="294.5" y="3.0" width="16" height="8.5" fill="#fbfbfb"/><rect x="294.5" y="11.5" width="16" height="8.5" fill="#ebecec"/><text x="302.5" y="15.5" font-size="11" font-weight="bold" text-anchor="middle" fill="#6a5838" font-family="Liberation Sans">S</text><rect x="316" y="3.0" width="27.5" height="19" fill="#2a4050" opacity="0.22"/><rect x="316" y="2.0" width="27.5" height="19" fill="#3e4a50"/><rect x="317" y="3.0" width="15" height="17" fill="#8a9696"/><rect x="332" y="3.0" width="10.5" height="17" fill="#bcc4c4"/><text x="324.5" y="15.5" font-size="10.5" text-anchor="middle" fill="#333b3b" font-family="Liberation Sans" letter-spacing="0.3">FX</text><path d="M335.05 9.4 A3.4 3.4 0 1 0 339.45 9.4" fill="none" stroke="#4a6a80" stroke-width="1"/><line x1="337.25" y1="7.5" x2="337.25" y2="11.5" stroke="#4a6a80" stroke-width="1.2"/><circle cx="355.5" cy="12.5" r="7.5" fill="#4a6070" opacity="0.25"/><circle cx="355.5" cy="11.5" r="7.5" fill="#4a5058"/><circle cx="355.5" cy="11.5" r="6.5" fill="url(#gph)"/><circle cx="355.5" cy="11.5" r="3.0" fill="none" stroke="#4a5260" stroke-width="1"/><line x1="351.5" y1="15.5" x2="359.5" y2="7.5" stroke="#4a5260" stroke-width="1"/><rect x="367" y="2.0" width="42" height="6" fill="#858e8d"/><rect x="367" y="8.0" width="42" height="13" fill="#76879a"/><rect x="369" y="4.0" width="16" height="15" fill="#3c4246"/><rect x="370" y="5.0" width="14" height="13" fill="#acb6b6"/><polyline points="373,13.5 377.5,8.0 381.5,12.5" fill="none" stroke="#444c54" stroke-width="1"/><rect x="371.5" y="12.0" width="3" height="3" fill="#4a4e54"/><rect x="376" y="6.5" width="3" height="3" fill="#4a4e54"/><rect x="380" y="11.0" width="3" height="3" fill="#4a4e54"/><text x="388" y="16.0" font-size="11" fill="#eef2f2" font-family="Liberation Sans">trim</text><clipPath id="ib4132.0"><path d="M413 2.0 H438.5 A9.5 9.5 0 0 1 438.5 21.0 H413 Z"/></clipPath><g clip-path="url(#ib4132.0)"><rect x="413" y="2.0" width="36" height="6" fill="#858e8d"/><rect x="413" y="8.0" width="36" height="13" fill="#76879a"/></g><text x="417.5" y="15.5" font-size="10.5" font-weight="bold" fill="#f0f2f2" font-family="Liberation Sans">IN</text><circle cx="438.5" cy="11.5" r="6.4" fill="none" stroke="#d4dadc" stroke-width="1"/><path d="M435.0 9.5 H442.0 L438.5 14.7 Z" fill="#c8d4dc"/><rect x="452" y="2.0" width="19" height="6" fill="#858e8d"/><rect x="452" y="8.0" width="19" height="13" fill="#76879a"/><rect x="460" y="9.0" width="6" height="5" fill="#d2dce2"/><ellipse cx="459" cy="11.5" rx="1.8" ry="5.3" fill="#76879a" stroke="#d2dce2" stroke-width="1"/></svg>
<div style="left:32px;top:426px;width:493px;height:1px;background:#262626"></div>
<svg style="left:0;top:427px" width="545" height="23"><defs>
<linearGradient id="gvol" x1="0" y1="0" x2="0" y2="1"><stop offset="0" stop-color="#ffffff"/><stop offset="0.2" stop-color="#eceeee"/><stop offset="0.38" stop-color="#b0b4b4"/><stop offset="0.5" stop-color="#868c8c"/><stop offset="0.62" stop-color="#7e8686"/><stop offset="0.72" stop-color="#9aa0a0"/><stop offset="0.84" stop-color="#687070"/><stop offset="0.95" stop-color="#505858"/><stop offset="1" stop-color="#202048"/></linearGradient>
<linearGradient id="gpan" x1="0" y1="0" x2="0" y2="1"><stop offset="0" stop-color="#e6e6e6"/><stop offset="0.6" stop-color="#dedede"/><stop offset="0.62" stop-color="#c4c8c8"/><stop offset="1" stop-color="#b4b8b8"/></linearGradient>
<linearGradient id="gph" x1="0" y1="0" x2="0" y2="1"><stop offset="0" stop-color="#b8c0c4"/><stop offset="0.5" stop-color="#98a4ac"/><stop offset="1" stop-color="#7a8890"/></linearGradient>
</defs><clipPath id="tc427"><path d="M32 0 H525 V23 H32 L32 23 Z"/></clipPath><g clip-path="url(#tc427)"><rect x="0" y="0" width="525" height="8" fill="#b9c0bf"/><rect x="0" y="8" width="525" height="10" fill="#a5adac"/><rect x="0" y="18" width="525" height="5" fill="#9ca4a3"/></g><rect x="49" y="2.0" width="161" height="19" rx="2" fill="#333"/><circle cx="49" cy="13.0" r="8.5" fill="#5a6470" opacity="0.45"/><circle cx="49" cy="11.5" r="9.5" fill="#222"/><clipPath id="rc4911.5"><circle cx="49" cy="11.5" r="7.8"/></clipPath><g clip-path="url(#rc4911.5)"><rect x="39.5" y="2.0" width="19.0" height="10.5" fill="#7e4e38"/><rect x="39.5" y="12.5" width="19.0" height="9.5" fill="#6a3628"/></g><text x="49" y="16.3" font-size="12.5" text-anchor="middle" fill="#e6d2b4" font-family="Liberation Sans">A</text><text x="61" y="16.0" font-size="12" fill="#cad0d6" font-family="Liberation Sans">Low Hits low boom</text><circle cx="210.5" cy="13.0" r="9" fill="#3a4a5a" opacity="0.35"/><circle cx="210.5" cy="11.5" r="9.5" fill="#1e1e1e"/><circle cx="210.5" cy="11.5" r="8.3" fill="url(#gvol)"/><rect x="209.9" y="5.5" width="1.3" height="5" fill="#222"/><rect x="224" y="3.0" width="24" height="19" fill="#000" opacity="0.25"/><rect x="224" y="2.0" width="24" height="19" fill="#1c1c1c"/><rect x="225" y="3.0" width="22" height="17" fill="#2e2e2e"/><circle cx="229.0" cy="7.0" r="3" fill="#000"/><circle cx="229.0" cy="7.0" r="2.3" fill="#10b050"/><circle cx="236.0" cy="7.0" r="3" fill="#000"/><circle cx="243.0" cy="7.0" r="3" fill="#000"/><circle cx="243.0" cy="7.0" r="2.3" fill="#1890c0"/><text x="236.0" y="18.0" font-size="7.5" text-anchor="middle" fill="#c8c8c8" font-family="Liberation Sans" font-weight="bold" textLength="19" lengthAdjust="spacingAndGlyphs">ROUTE</text><circle cx="261.5" cy="13.0" r="9" fill="#3a4a5a" opacity="0.3"/><circle cx="261.5" cy="11.5" r="9.4" fill="#3c3c3c"/><circle cx="261.5" cy="11.5" r="8.2" fill="url(#gpan)"/><rect x="260.9" y="5.5" width="1.3" height="5" fill="#222"/><rect x="275.5" y="3.0" width="18" height="19" fill="#2a4050" opacity="0.25"/><rect x="275.5" y="2.0" width="18" height="19" fill="#505050"/><rect x="276.5" y="3.0" width="16" height="8.5" fill="#fbfbfb"/><rect x="276.5" y="11.5" width="16" height="8.5" fill="#ebecec"/><text x="284.5" y="15.5" font-size="11" font-weight="bold" text-anchor="middle" fill="#5c3a2a" font-family="Liberation Sans">M</text><rect x="293.5" y="3.0" width="18" height="19" fill="#2a4050" opacity="0.25"/><rect x="293.5" y="2.0" width="18" height="19" fill="#505050"/><rect x="294.5" y="3.0" width="16" height="8.5" fill="#fbfbfb"/><rect x="294.5" y="11.5" width="16" height="8.5" fill="#ebecec"/><text x="302.5" y="15.5" font-size="11" font-weight="bold" text-anchor="middle" fill="#6a5838" font-family="Liberation Sans">S</text><rect x="316" y="3.0" width="27.5" height="19" fill="#2a4050" opacity="0.22"/><rect x="316" y="2.0" width="27.5" height="19" fill="#3e4a50"/><rect x="317" y="3.0" width="15" height="17" fill="#8a9696"/><rect x="332" y="3.0" width="10.5" height="17" fill="#bcc4c4"/><text x="324.5" y="15.5" font-size="10.5" text-anchor="middle" fill="#333b3b" font-family="Liberation Sans" letter-spacing="0.3">FX</text><path d="M335.05 9.4 A3.4 3.4 0 1 0 339.45 9.4" fill="none" stroke="#4a6a80" stroke-width="1"/><line x1="337.25" y1="7.5" x2="337.25" y2="11.5" stroke="#4a6a80" stroke-width="1.2"/><circle cx="355.5" cy="12.5" r="7.5" fill="#4a6070" opacity="0.25"/><circle cx="355.5" cy="11.5" r="7.5" fill="#4a5058"/><circle cx="355.5" cy="11.5" r="6.5" fill="url(#gph)"/><circle cx="355.5" cy="11.5" r="3.0" fill="none" stroke="#4a5260" stroke-width="1"/><line x1="351.5" y1="15.5" x2="359.5" y2="7.5" stroke="#4a5260" stroke-width="1"/><rect x="367" y="2.0" width="42" height="6" fill="#858e8d"/><rect x="367" y="8.0" width="42" height="13" fill="#76879a"/><rect x="369" y="4.0" width="16" height="15" fill="#3c4246"/><rect x="370" y="5.0" width="14" height="13" fill="#acb6b6"/><polyline points="373,13.5 377.5,8.0 381.5,12.5" fill="none" stroke="#444c54" stroke-width="1"/><rect x="371.5" y="12.0" width="3" height="3" fill="#4a4e54"/><rect x="376" y="6.5" width="3" height="3" fill="#4a4e54"/><rect x="380" y="11.0" width="3" height="3" fill="#4a4e54"/><text x="388" y="16.0" font-size="11" fill="#eef2f2" font-family="Liberation Sans">trim</text><clipPath id="ib4132.0"><path d="M413 2.0 H438.5 A9.5 9.5 0 0 1 438.5 21.0 H413 Z"/></clipPath><g clip-path="url(#ib4132.0)"><rect x="413" y="2.0" width="36" height="6" fill="#858e8d"/><rect x="413" y="8.0" width="36" height="13" fill="#76879a"/></g><text x="417.5" y="15.5" font-size="10.5" font-weight="bold" fill="#f0f2f2" font-family="Liberation Sans">IN</text><circle cx="438.5" cy="11.5" r="6.4" fill="none" stroke="#d4dadc" stroke-width="1"/><path d="M435.0 9.5 H442.0 L438.5 14.7 Z" fill="#c8d4dc"/><rect x="452" y="2.0" width="19" height="6" fill="#858e8d"/><rect x="452" y="8.0" width="19" height="13" fill="#76879a"/><rect x="460" y="9.0" width="6" height="5" fill="#d2dce2"/><ellipse cx="459" cy="11.5" rx="1.8" ry="5.3" fill="#76879a" stroke="#d2dce2" stroke-width="1"/></svg>
<div style="left:32px;top:450px;width:493px;height:1px;background:#262626"></div>
<svg style="left:0;top:451px" width="545" height="23"><defs>
<linearGradient id="gvol" x1="0" y1="0" x2="0" y2="1"><stop offset="0" stop-color="#ffffff"/><stop offset="0.2" stop-color="#eceeee"/><stop offset="0.38" stop-color="#b0b4b4"/><stop offset="0.5" stop-color="#868c8c"/><stop offset="0.62" stop-color="#7e8686"/><stop offset="0.72" stop-color="#9aa0a0"/><stop offset="0.84" stop-color="#687070"/><stop offset="0.95" stop-color="#505858"/><stop offset="1" stop-color="#202048"/></linearGradient>
<linearGradient id="gpan" x1="0" y1="0" x2="0" y2="1"><stop offset="0" stop-color="#e6e6e6"/><stop offset="0.6" stop-color="#dedede"/><stop offset="0.62" stop-color="#c4c8c8"/><stop offset="1" stop-color="#b4b8b8"/></linearGradient>
<linearGradient id="gph" x1="0" y1="0" x2="0" y2="1"><stop offset="0" stop-color="#b8c0c4"/><stop offset="0.5" stop-color="#98a4ac"/><stop offset="1" stop-color="#7a8890"/></linearGradient>
</defs><clipPath id="tc451"><path d="M32 0 H525 V23 H32 L32 23 Z"/></clipPath><g clip-path="url(#tc451)"><rect x="0" y="0" width="525" height="8" fill="#b9c0bf"/><rect x="0" y="8" width="525" height="10" fill="#a5adac"/><rect x="0" y="18" width="525" height="5" fill="#9ca4a3"/></g><rect x="49" y="2.0" width="161" height="19" rx="2" fill="#333"/><circle cx="49" cy="13.0" r="8.5" fill="#5a6470" opacity="0.45"/><circle cx="49" cy="11.5" r="9.5" fill="#222"/><clipPath id="rc4911.5"><circle cx="49" cy="11.5" r="7.8"/></clipPath><g clip-path="url(#rc4911.5)"><rect x="39.5" y="2.0" width="19.0" height="10.5" fill="#7e4e38"/><rect x="39.5" y="12.5" width="19.0" height="9.5" fill="#6a3628"/></g><text x="49" y="16.3" font-size="12.5" text-anchor="middle" fill="#e6d2b4" font-family="Liberation Sans">A</text><text x="61" y="16.0" font-size="12" fill="#cad0d6" font-family="Liberation Sans">Bongo Hits</text><circle cx="210.5" cy="13.0" r="9" fill="#3a4a5a" opacity="0.35"/><circle cx="210.5" cy="11.5" r="9.5" fill="#1e1e1e"/><circle cx="210.5" cy="11.5" r="8.3" fill="url(#gvol)"/><rect x="209.9" y="5.5" width="1.3" height="5" fill="#222"/><rect x="224" y="3.0" width="24" height="19" fill="#000" opacity="0.25"/><rect x="224" y="2.0" width="24" height="19" fill="#1c1c1c"/><rect x="225" y="3.0" width="22" height="17" fill="#2e2e2e"/><circle cx="229.0" cy="7.0" r="3" fill="#000"/><circle cx="229.0" cy="7.0" r="2.3" fill="#10b050"/><circle cx="236.0" cy="7.0" r="3" fill="#000"/><circle cx="243.0" cy="7.0" r="3" fill="#000"/><circle cx="243.0" cy="7.0" r="2.3" fill="#1890c0"/><text x="236.0" y="18.0" font-size="7.5" text-anchor="middle" fill="#c8c8c8" font-family="Liberation Sans" font-weight="bold" textLength="19" lengthAdjust="spacingAndGlyphs">ROUTE</text><circle cx="261.5" cy="13.0" r="9" fill="#3a4a5a" opacity="0.3"/><circle cx="261.5" cy="11.5" r="9.4" fill="#3c3c3c"/><circle cx="261.5" cy="11.5" r="8.2" fill="url(#gpan)"/><rect x="260.9" y="5.5" width="1.3" height="5" fill="#222"/><rect x="275.5" y="3.0" width="18" height="19" fill="#2a4050" opacity="0.25"/><rect x="275.5" y="2.0" width="18" height="19" fill="#505050"/><rect x="276.5" y="3.0" width="16" height="8.5" fill="#fbfbfb"/><rect x="276.5" y="11.5" width="16" height="8.5" fill="#ebecec"/><text x="284.5" y="15.5" font-size="11" font-weight="bold" text-anchor="middle" fill="#5c3a2a" font-family="Liberation Sans">M</text><rect x="293.5" y="3.0" width="18" height="19" fill="#2a4050" opacity="0.25"/><rect x="293.5" y="2.0" width="18" height="19" fill="#505050"/><rect x="294.5" y="3.0" width="16" height="8.5" fill="#fbfbfb"/><rect x="294.5" y="11.5" width="16" height="8.5" fill="#ebecec"/><text x="302.5" y="15.5" font-size="11" font-weight="bold" text-anchor="middle" fill="#6a5838" font-family="Liberation Sans">S</text><rect x="316" y="3.0" width="27.5" height="19" fill="#2a4050" opacity="0.22"/><rect x="316" y="2.0" width="27.5" height="19" fill="#3e4a50"/><rect x="317" y="3.0" width="15" height="17" fill="#8a9696"/><rect x="332" y="3.0" width="10.5" height="17" fill="#bcc4c4"/><text x="324.5" y="15.5" font-size="10.5" text-anchor="middle" fill="#333b3b" font-family="Liberation Sans" letter-spacing="0.3">FX</text><path d="M335.05 9.4 A3.4 3.4 0 1 0 339.45 9.4" fill="none" stroke="#4a6a80" stroke-width="1"/><line x1="337.25" y1="7.5" x2="337.25" y2="11.5" stroke="#4a6a80" stroke-width="1.2"/><circle cx="355.5" cy="12.5" r="7.5" fill="#4a6070" opacity="0.25"/><circle cx="355.5" cy="11.5" r="7.5" fill="#4a5058"/><circle cx="355.5" cy="11.5" r="6.5" fill="url(#gph)"/><circle cx="355.5" cy="11.5" r="3.0" fill="none" stroke="#4a5260" stroke-width="1"/><line x1="351.5" y1="15.5" x2="359.5" y2="7.5" stroke="#4a5260" stroke-width="1"/><rect x="367" y="2.0" width="42" height="6" fill="#858e8d"/><rect x="367" y="8.0" width="42" height="13" fill="#76879a"/><rect x="369" y="4.0" width="16" height="15" fill="#3c4246"/><rect x="370" y="5.0" width="14" height="13" fill="#acb6b6"/><polyline points="373,13.5 377.5,8.0 381.5,12.5" fill="none" stroke="#444c54" stroke-width="1"/><rect x="371.5" y="12.0" width="3" height="3" fill="#4a4e54"/><rect x="376" y="6.5" width="3" height="3" fill="#4a4e54"/><rect x="380" y="11.0" width="3" height="3" fill="#4a4e54"/><text x="388" y="16.0" font-size="11" fill="#eef2f2" font-family="Liberation Sans">trim</text><clipPath id="ib4132.0"><path d="M413 2.0 H438.5 A9.5 9.5 0 0 1 438.5 21.0 H413 Z"/></clipPath><g clip-path="url(#ib4132.0)"><rect x="413" y="2.0" width="36" height="6" fill="#858e8d"/><rect x="413" y="8.0" width="36" height="13" fill="#76879a"/></g><text x="417.5" y="15.5" font-size="10.5" font-weight="bold" fill="#f0f2f2" font-family="Liberation Sans">IN</text><circle cx="438.5" cy="11.5" r="6.4" fill="none" stroke="#d4dadc" stroke-width="1"/><path d="M435.0 9.5 H442.0 L438.5 14.7 Z" fill="#c8d4dc"/><rect x="452" y="2.0" width="19" height="6" fill="#858e8d"/><rect x="452" y="8.0" width="19" height="13" fill="#76879a"/><rect x="460" y="9.0" width="6" height="5" fill="#d2dce2"/><ellipse cx="459" cy="11.5" rx="1.8" ry="5.3" fill="#76879a" stroke="#d2dce2" stroke-width="1"/></svg>
<div style="left:32px;top:474px;width:493px;height:1px;background:#262626"></div>
<svg style="left:0;top:475px" width="545" height="23"><defs>
<linearGradient id="gvol" x1="0" y1="0" x2="0" y2="1"><stop offset="0" stop-color="#ffffff"/><stop offset="0.2" stop-color="#eceeee"/><stop offset="0.38" stop-color="#b0b4b4"/><stop offset="0.5" stop-color="#868c8c"/><stop offset="0.62" stop-color="#7e8686"/><stop offset="0.72" stop-color="#9aa0a0"/><stop offset="0.84" stop-color="#687070"/><stop offset="0.95" stop-color="#505858"/><stop offset="1" stop-color="#202048"/></linearGradient>
<linearGradient id="gpan" x1="0" y1="0" x2="0" y2="1"><stop offset="0" stop-color="#e6e6e6"/><stop offset="0.6" stop-color="#dedede"/><stop offset="0.62" stop-color="#c4c8c8"/><stop offset="1" stop-color="#b4b8b8"/></linearGradient>
<linearGradient id="gph" x1="0" y1="0" x2="0" y2="1"><stop offset="0" stop-color="#b8c0c4"/><stop offset="0.5" stop-color="#98a4ac"/><stop offset="1" stop-color="#7a8890"/></linearGradient>
</defs><clipPath id="tc475"><path d="M32 0 H525 V23 H32 L32 23 Z"/></clipPath><g clip-path="url(#tc475)"><rect x="0" y="0" width="525" height="8" fill="#b9c0bf"/><rect x="0" y="8" width="525" height="10" fill="#a5adac"/><rect x="0" y="18" width="525" height="5" fill="#9ca4a3"/></g><rect x="49" y="2.0" width="161" height="19" rx="2" fill="#333"/><circle cx="49" cy="13.0" r="8.5" fill="#5a6470" opacity="0.45"/><circle cx="49" cy="11.5" r="9.5" fill="#222"/><clipPath id="rc4911.5"><circle cx="49" cy="11.5" r="7.8"/></clipPath><g clip-path="url(#rc4911.5)"><rect x="39.5" y="2.0" width="19.0" height="10.5" fill="#7e4e38"/><rect x="39.5" y="12.5" width="19.0" height="9.5" fill="#6a3628"/></g><text x="49" y="16.3" font-size="12.5" text-anchor="middle" fill="#e6d2b4" font-family="Liberation Sans">A</text><text x="61" y="16.0" font-size="12" fill="#cad0d6" font-family="Liberation Sans">Conga1 Hits</text><circle cx="210.5" cy="13.0" r="9" fill="#3a4a5a" opacity="0.35"/><circle cx="210.5" cy="11.5" r="9.5" fill="#1e1e1e"/><circle cx="210.5" cy="11.5" r="8.3" fill="url(#gvol)"/><rect x="209.9" y="5.5" width="1.3" height="5" fill="#222"/><rect x="224" y="3.0" width="24" height="19" fill="#000" opacity="0.25"/><rect x="224" y="2.0" width="24" height="19" fill="#1c1c1c"/><rect x="225" y="3.0" width="22" height="17" fill="#2e2e2e"/><circle cx="229.0" cy="7.0" r="3" fill="#000"/><circle cx="229.0" cy="7.0" r="2.3" fill="#10b050"/><circle cx="236.0" cy="7.0" r="3" fill="#000"/><circle cx="243.0" cy="7.0" r="3" fill="#000"/><circle cx="243.0" cy="7.0" r="2.3" fill="#1890c0"/><text x="236.0" y="18.0" font-size="7.5" text-anchor="middle" fill="#c8c8c8" font-family="Liberation Sans" font-weight="bold" textLength="19" lengthAdjust="spacingAndGlyphs">ROUTE</text><circle cx="261.5" cy="13.0" r="9" fill="#3a4a5a" opacity="0.3"/><circle cx="261.5" cy="11.5" r="9.4" fill="#3c3c3c"/><circle cx="261.5" cy="11.5" r="8.2" fill="url(#gpan)"/><rect x="260.9" y="5.5" width="1.3" height="5" fill="#222"/><rect x="275.5" y="3.0" width="18" height="19" fill="#2a4050" opacity="0.25"/><rect x="275.5" y="2.0" width="18" height="19" fill="#505050"/><rect x="276.5" y="3.0" width="16" height="8.5" fill="#fbfbfb"/><rect x="276.5" y="11.5" width="16" height="8.5" fill="#ebecec"/><text x="284.5" y="15.5" font-size="11" font-weight="bold" text-anchor="middle" fill="#5c3a2a" font-family="Liberation Sans">M</text><rect x="293.5" y="3.0" width="18" height="19" fill="#2a4050" opacity="0.25"/><rect x="293.5" y="2.0" width="18" height="19" fill="#505050"/><rect x="294.5" y="3.0" width="16" height="8.5" fill="#fbfbfb"/><rect x="294.5" y="11.5" width="16" height="8.5" fill="#ebecec"/><text x="302.5" y="15.5" font-size="11" font-weight="bold" text-anchor="middle" fill="#6a5838" font-family="Liberation Sans">S</text><rect x="316" y="3.0" width="27.5" height="19" fill="#2a4050" opacity="0.22"/><rect x="316" y="2.0" width="27.5" height="19" fill="#3e4a50"/><rect x="317" y="3.0" width="15" height="17" fill="#8a9696"/><rect x="332" y="3.0" width="10.5" height="17" fill="#bcc4c4"/><text x="324.5" y="15.5" font-size="10.5" text-anchor="middle" fill="#333b3b" font-family="Liberation Sans" letter-spacing="0.3">FX</text><path d="M335.05 9.4 A3.4 3.4 0 1 0 339.45 9.4" fill="none" stroke="#4a6a80" stroke-width="1"/><line x1="337.25" y1="7.5" x2="337.25" y2="11.5" stroke="#4a6a80" stroke-width="1.2"/><circle cx="355.5" cy="12.5" r="7.5" fill="#4a6070" opacity="0.25"/><circle cx="355.5" cy="11.5" r="7.5" fill="#4a5058"/><circle cx="355.5" cy="11.5" r="6.5" fill="url(#gph)"/><circle cx="355.5" cy="11.5" r="3.0" fill="none" stroke="#4a5260" stroke-width="1"/><line x1="351.5" y1="15.5" x2="359.5" y2="7.5" stroke="#4a5260" stroke-width="1"/><rect x="367" y="2.0" width="42" height="6" fill="#858e8d"/><rect x="367" y="8.0" width="42" height="13" fill="#76879a"/><rect x="369" y="4.0" width="16" height="15" fill="#3c4246"/><rect x="370" y="5.0" width="14" height="13" fill="#acb6b6"/><polyline points="373,13.5 377.5,8.0 381.5,12.5" fill="none" stroke="#444c54" stroke-width="1"/><rect x="371.5" y="12.0" width="3" height="3" fill="#4a4e54"/><rect x="376" y="6.5" width="3" height="3" fill="#4a4e54"/><rect x="380" y="11.0" width="3" height="3" fill="#4a4e54"/><text x="388" y="16.0" font-size="11" fill="#eef2f2" font-family="Liberation Sans">trim</text><clipPath id="ib4132.0"><path d="M413 2.0 H438.5 A9.5 9.5 0 0 1 438.5 21.0 H413 Z"/></clipPath><g clip-path="url(#ib4132.0)"><rect x="413" y="2.0" width="36" height="6" fill="#858e8d"/><rect x="413" y="8.0" width="36" height="13" fill="#76879a"/></g><text x="417.5" y="15.5" font-size="10.5" font-weight="bold" fill="#f0f2f2" font-family="Liberation Sans">IN</text><circle cx="438.5" cy="11.5" r="6.4" fill="none" stroke="#d4dadc" stroke-width="1"/><path d="M435.0 9.5 H442.0 L438.5 14.7 Z" fill="#c8d4dc"/><rect x="452" y="2.0" width="19" height="6" fill="#858e8d"/><rect x="452" y="8.0" width="19" height="13" fill="#76879a"/><rect x="460" y="9.0" width="6" height="5" fill="#d2dce2"/><ellipse cx="459" cy="11.5" rx="1.8" ry="5.3" fill="#76879a" stroke="#d2dce2" stroke-width="1"/></svg>
<div style="left:32px;top:498px;width:493px;height:1px;background:#262626"></div>
<svg style="left:525px;top:110px" width="40" height="388"><rect x="0" y="0" width="32" height="388" fill="#2a2a2a"/><rect x="32" y="0" width="8" height="388" fill="#333"/><rect x="0" y="0" width="1" height="388" fill="#2a2a2a"/><rect x="1" y="0" width="17" height="50" fill="#0b4088"/><text x="9.5" y="30" font-size="12" text-anchor="middle" fill="#f0f4ff" font-family="Liberation Sans">1</text><path d="M4.5 49 V42 H8.0 L9.5 43.5 H14.5 V49 Z" fill="#0d3c6e"/><rect x="1" y="51" width="17" height="48" fill="#333"/><circle cx="9.5" cy="58.4" r="6" fill="#9a9e9e"/><path d="M6.2 56.1 H12.8 L9.5 61.4 Z" fill="#2e2e2e"/><path d="M1 99 V74 A8.5 8 0 0 1 18 74 V99 Z" fill="#8a9090"/><text x="9.5" y="85.5" font-size="12" text-anchor="middle" fill="#f4f4f4" font-family="Liberation Sans">2</text><path d="M4.5 97 V90 H8.0 L9.5 91.5 H14.5 V97 Z" fill="#5e6464"/><rect x="1" y="100" width="17" height="34" fill="#333"/><circle cx="9.5" cy="107.7" r="6" fill="#9a9e9e"/><path d="M7.5 104.2 V111.2 L13.0 107.7 Z" fill="#2e2e2e"/><path d="M1 134 V123 A8.5 8 0 0 1 18 123 V134 Z" fill="#e4700c"/><path d="M4.5 133 V126 H8.0 L9.5 127.5 H14.5 V133 Z" fill="#8a5a34"/><rect x="1" y="135" width="17" height="37" fill="#333"/><circle cx="9.5" cy="142" r="6" fill="#9a9e9e"/><path d="M6.2 139.7 H12.8 L9.5 145 Z" fill="#2e2e2e"/><path d="M1 172 V158 A8.5 8 0 0 1 18 158 V172 Z" fill="#1a8cf2"/><path d="M4.5 171 V164 H8.0 L9.5 165.5 H14.5 V171 Z" fill="#0c3c78"/><rect x="28.5" y="137" width="1.5" height="34" fill="#555"/><rect x="18" y="172" width="14" height="1" fill="#333"/><rect x="1" y="173" width="17" height="23" fill="#878d8d"/><text x="9.5" y="189" font-size="12" text-anchor="middle" fill="#eef0f0" font-family="Liberation Sans">14</text><rect x="18" y="196" width="14" height="1" fill="#333"/><rect x="1" y="197" width="17" height="23" fill="#878d8d"/><text x="9.5" y="213" font-size="12" text-anchor="middle" fill="#eef0f0" font-family="Liberation Sans">15</text><rect x="18" y="220" width="14" height="1" fill="#333"/><rect x="1" y="221" width="17" height="23" fill="#878d8d"/><text x="9.5" y="237" font-size="12" text-anchor="middle" fill="#eef0f0" font-family="Liberation Sans">16</text><rect x="18" y="244" width="14" height="1" fill="#333"/><rect x="1" y="245" width="17" height="23" fill="#878d8d"/><text x="9.5" y="261" font-size="12" text-anchor="middle" fill="#eef0f0" font-family="Liberation Sans">17</text><rect x="18" y="268" width="14" height="1" fill="#333"/><rect x="1" y="269" width="17" height="23" fill="#878d8d"/><text x="9.5" y="285" font-size="12" text-anchor="middle" fill="#eef0f0" font-family="Liberation Sans">18</text><rect x="18" y="292" width="14" height="1" fill="#333"/><rect x="1" y="293" width="17" height="23" fill="#878d8d"/><text x="9.5" y="309" font-size="12" text-anchor="middle" fill="#eef0f0" font-family="Liberation Sans">19</text><rect x="18" y="316" width="14" height="1" fill="#333"/><rect x="1" y="317" width="17" height="23" fill="#878d8d"/><text x="9.5" y="333" font-size="12" text-anchor="middle" fill="#eef0f0" font-family="Liberation Sans">20</text><rect x="18" y="340" width="14" height="1" fill="#333"/><rect x="1" y="341" width="17" height="23" fill="#878d8d"/><text x="9.5" y="357" font-size="12" text-anchor="middle" fill="#eef0f0" font-family="Liberation Sans">21</text><rect x="18" y="364" width="14" height="1" fill="#333"/><path d="M1 365 H18 V380 A8.5 8 0 0 1 1 380 Z" fill="#878d8d"/><path d="M4.5 382 V375 H8.0 L9.5 376.5 H14.5 V382 Z" fill="#6a7070"/></svg>
<div style="left:631px;top:100px;width:932px;height:414px;background:rgba(0,0,0,0.17);border-radius:8px"></div>
<div style="left:637px;top:94px;width:920px;height:412px;background:#2c3034;border-radius:6px 6px 2px 2px"></div>
<div style="left:638px;top:95px;width:918px;height:410px;background:#e4f0f4;border-radius:5px 5px 1px 1px"></div>
<div style="left:639px;top:96px;width:916px;height:408px;background:linear-gradient(#d6dadc,#c0c8d0 60%,#b4bccc);border-radius:4px 4px 0 0"></div>
<div style="left:639px;top:96px;width:916px;height:26px;background:linear-gradient(#5c636a 0,#60676e 9px,#6c737a 11px,#a2acb2 14px,#bcc5ca 17px,#c8d0d4 25px,#d0d6d8 28px);border-radius:4px 4px 0 0"></div>
<div style="left:639px;top:500px;width:916px;height:4px;background:linear-gradient(#6e7880,#6a747c)"></div>
<div style="left:643px;top:121px;width:908px;height:379px;background:#eaf0f2"></div>
<div style="left:644px;top:122px;width:906px;height:377px;background:#484c50"></div>
<div style="left:645px;top:123px;width:904px;height:375px;background:#b5b9b9"></div>
<div style="left:639px;top:96px;width:190px;height:26px;background:radial-gradient(ellipse 100px 16px at 85px 13px,rgba(214,220,224,0.7),rgba(214,220,224,0.3) 70%,rgba(214,220,224,0) 100%)"></div>
<svg style="left:645px;top:99px" width="17" height="17"><path d="M5.5 4 Q10 2.6 15.6 7 Q14.2 12.5 8.5 16.2 Q8.6 9 5.5 4 Z" fill="#b57850"/><path d="M7 3.6 Q11 3 15.4 6.6 L14.6 8.6 Q11 5.6 8 6 Z" fill="#c48a78"/><path d="M0.6 5.8 Q2 4.2 4 4.3 Q7.2 9 7.9 16 Q1 13.2 0.6 5.8 Z" fill="#5cc22e"/><path d="M1.6 4.8 Q4.5 2.6 6.6 3.6 Q9.6 9 9 15.6 L7.6 16 Q7.4 9 4.6 4.7 Q3 4.3 1.6 4.8 Z" fill="#fafafa"/><path d="M3 3.2 A7.3 7.3 0 0 1 15.9 7.2 L14.3 7.5 A5.7 5.7 0 0 0 4.4 4.4 Z" fill="#2a92e4"/></svg>
<div style="left:666px;top:101px;font-size:12px;line-height:14px;color:#111;white-space:nowrap;text-shadow:0 0 6px #d4dadd,0 0 3px #dfe4e6">S&amp;M - Cycle Actions</div>
<svg style="left:1481px;top:96px" width="16" height="18"><path d="M4 2 H12 V4 H10.5 V9 L13 11 V12 H3 V11 L5.5 9 V4 H4 Z" fill="#fff"/><rect x="7.4" y="12" width="1.3" height="5" fill="#fff"/><rect x="7" y="4" width="1" height="5" fill="#777"/></svg>
<div style="left:1502px;top:95px;width:46px;height:18px;border:1px solid #c4ccd2;border-top:none;border-radius:0 0 4px 4px;background:linear-gradient(#6a747c,#7a848c)"></div>
<svg style="left:1519px;top:98px" width="12" height="11"><path d="M2 2 L10 9 M10 2 L2 9" stroke="#fff" stroke-width="2.2" stroke-linecap="round"/></svg>
<div style="left:653px;top:132px;width:150px;height:19px;background:#d9dcdc;border:1px solid #eef1f2;border-right-color:#f4f6f6;border-bottom-color:#f4f6f6;box-shadow:inset 1px 1px 0 #c8cccc"></div>
<div style="left:657px;top:135px;font-size:10.6px;line-height:13px;color:#151515;white-space:nowrap;">Filter</div>
<div style="left:811px;top:135px;width:13px;height:13px;background:#e9ecec;border:1px solid #555"></div>
<svg style="left:811px;top:135px" width="13" height="13"><path d="M2.5 2.5 L10.5 10.5 M10.5 2.5 L2.5 10.5" stroke="#111" stroke-width="1"/></svg>
<div style="left:829px;top:135px;font-size:10.6px;line-height:13px;color:#151515;white-space:nowrap;">Consolidate undo points</div>
<div style="left:1353px;top:135px;font-size:10.6px;line-height:13px;color:#151515;white-space:nowrap;">Section:</div>
<div style="left:1398px;top:132px;width:139px;height:18px;background:#b8bcbc;border:1px solid #888d8d;border-top-color:#c8cccc"></div>
<div style="left:1518px;top:133px;width:1px;height:16px;background:#e4e8e8"></div>
<div style="left:1401px;top:135px;font-size:10.6px;line-height:13px;color:#151515;white-space:nowrap;">Main</div>
<svg style="left:1521px;top:135px" width="14" height="12"><path d="M2.5 3.5 L7 8 L11.5 3.5" fill="none" stroke="#333" stroke-width="1"/></svg>
<div style="left:653px;top:159px;width:440px;height:298px;background:#8a9090"></div>
<div style="left:654px;top:160px;width:438px;height:296px;background:#d9dcdb"></div>
<div style="left:654px;top:160px;width:438px;height:24px;background:#fafafa"></div>
<div style="left:654px;top:183px;width:438px;height:1px;background:#e8eaea"></div>
<div style="left:654px;top:184px;width:438px;height:1px;background:#c6caca"></div>
<div style="left:704px;top:162px;width:1px;height:21px;background:#e0e2e2"></div>
<div style="left:964px;top:162px;width:1px;height:21px;background:#e0e2e2"></div>
<div style="left:1014px;top:162px;width:1px;height:21px;background:#e0e2e2"></div>
<div style="left:655px;top:161px;width:50px;height:23px;background:linear-gradient(#f4fbfd 0,#f4fbfd 38%,#d8eef6 38%);border:1px solid #98d4f2"></div>
<svg style="left:676px;top:162px" width="8" height="5"><path d="M1 4 L4 1 L7 4" fill="none" stroke="#4a9ad0" stroke-width="1.3"/></svg>
<div style="left:659px;top:167px;font-size:10.6px;line-height:13px;color:#151515;white-space:nowrap;">Id</div>
<div style="left:710px;top:167px;font-size:10.6px;line-height:13px;color:#151515;white-space:nowrap;">Cycle action name</div>
<div style="left:970px;top:167px;font-size:10.6px;line-height:13px;color:#151515;white-space:nowrap;">Toggle</div>
<div style="left:1020px;top:167px;font-size:10.6px;line-height:13px;color:#151515;white-space:nowrap;"></div>
<div style="left:654px;top:202px;width:438px;height:1px;background:#bcc0c0"></div>
<div style="left:654px;top:188px;width:45px;text-align:center;font-size:10.6px;line-height:13px;color:#151515;white-space:nowrap;">1</div>
<div style="left:710px;top:188px;font-size:10.6px;line-height:13px;color:#151515;white-space:nowrap;">user_CE_custom : Solo mode</div>
<div style="left:654px;top:219px;width:438px;height:1px;background:#bcc0c0"></div>
<div style="left:654px;top:205px;width:45px;text-align:center;font-size:10.6px;line-height:13px;color:#151515;white-space:nowrap;">2</div>
<div style="left:710px;top:205px;font-size:10.6px;line-height:13px;color:#151515;white-space:nowrap;">user_CE_Bypass uad plugins</div>
<div style="left:654px;top:236px;width:438px;height:1px;background:#bcc0c0"></div>
<div style="left:654px;top:222px;width:45px;text-align:center;font-size:10.6px;line-height:13px;color:#151515;white-space:nowrap;">3</div>
<div style="left:710px;top:222px;font-size:10.6px;line-height:13px;color:#151515;white-space:nowrap;">Metronom enable</div>
<div style="left:654px;top:253px;width:438px;height:1px;background:#bcc0c0"></div>
<div style="left:654px;top:239px;width:45px;text-align:center;font-size:10.6px;line-height:13px;color:#151515;white-space:nowrap;">4</div>
<div style="left:710px;top:239px;font-size:10.6px;line-height:13px;color:#151515;white-space:nowrap;">uad- bypass all plugin</div>
<div style="left:654px;top:270px;width:438px;height:1px;background:#bcc0c0"></div>
<div style="left:654px;top:256px;width:45px;text-align:center;font-size:10.6px;line-height:13px;color:#151515;white-space:nowrap;">5</div>
<div style="left:710px;top:256px;font-size:10.6px;line-height:13px;color:#151515;white-space:nowrap;">audio warp 2</div>
<div style="left:654px;top:287px;width:438px;height:1px;background:#bcc0c0"></div>
<div style="left:654px;top:273px;width:45px;text-align:center;font-size:10.6px;line-height:13px;color:#151515;white-space:nowrap;">6</div>
<div style="left:710px;top:273px;font-size:10.6px;line-height:13px;color:#151515;white-space:nowrap;">audio warp mouse</div>
<div style="left:654px;top:304px;width:438px;height:1px;background:#bcc0c0"></div>
<div style="left:654px;top:290px;width:45px;text-align:center;font-size:10.6px;line-height:13px;color:#151515;white-space:nowrap;">7</div>
<div style="left:710px;top:290px;font-size:10.6px;line-height:13px;color:#151515;white-space:nowrap;">Bypass All fx on selected track</div>
<div style="left:654px;top:321px;width:438px;height:1px;background:#bcc0c0"></div>
<div style="left:654px;top:307px;width:45px;text-align:center;font-size:10.6px;line-height:13px;color:#151515;white-space:nowrap;">8</div>
<div style="left:710px;top:307px;font-size:10.6px;line-height:13px;color:#151515;white-space:nowrap;">Offline all FX selected track</div>
<div style="left:654px;top:338px;width:438px;height:1px;background:#bcc0c0"></div>
<div style="left:654px;top:324px;width:45px;text-align:center;font-size:10.6px;line-height:13px;color:#151515;white-space:nowrap;">9</div>
<div style="left:710px;top:324px;font-size:10.6px;line-height:13px;color:#151515;white-space:nowrap;">kontakt vst</div>
<div style="left:654px;top:355px;width:438px;height:1px;background:#bcc0c0"></div>
<div style="left:654px;top:341px;width:45px;text-align:center;font-size:10.6px;line-height:13px;color:#151515;white-space:nowrap;">10</div>
<div style="left:710px;top:341px;font-size:10.6px;line-height:13px;color:#151515;white-space:nowrap;">Duplicate trakcs_empty</div>
<div style="left:658px;top:356px;width:356px;height:17px;background:#f9f9f9"></div>
<div style="left:654px;top:372px;width:438px;height:1px;background:#bcc0c0"></div>
<div style="left:654px;top:358px;width:45px;text-align:center;font-size:10.6px;line-height:13px;color:#151515;white-space:nowrap;">12</div>
<div style="left:710px;top:358px;font-size:10.6px;line-height:13px;color:#151515;white-space:nowrap;">user_Folder Hide</div>
<div style="left:704px;top:186px;width:1px;height:187px;background:#bcc0c0"></div>
<div style="left:704px;top:373px;width:1px;height:83px;background:repeating-linear-gradient(#9aa0a0 0 1px,transparent 1px 4px)"></div>
<div style="left:964px;top:186px;width:1px;height:187px;background:#bcc0c0"></div>
<div style="left:964px;top:373px;width:1px;height:83px;background:repeating-linear-gradient(#9aa0a0 0 1px,transparent 1px 4px)"></div>
<div style="left:1014px;top:186px;width:1px;height:187px;background:#bcc0c0"></div>
<div style="left:1014px;top:373px;width:1px;height:83px;background:repeating-linear-gradient(#9aa0a0 0 1px,transparent 1px 4px)"></div>
<svg style="left:1093px;top:163px" width="7" height="22"><path d="M6 1 L1 5 L6 9 Z" fill="#222"/><path d="M1 12 L6 16 L1 20 Z" fill="#222"/></svg>
<div style="left:1100px;top:159px;width:440px;height:298px;background:#8a9090"></div>
<div style="left:1101px;top:160px;width:438px;height:296px;background:#d9dcdb"></div>
<div style="left:1101px;top:160px;width:438px;height:24px;background:#fafafa"></div>
<div style="left:1101px;top:183px;width:438px;height:1px;background:#e8eaea"></div>
<div style="left:1101px;top:184px;width:438px;height:1px;background:#c6caca"></div>
<div style="left:1352px;top:162px;width:1px;height:21px;background:#e0e2e2"></div>
<div style="left:1107px;top:167px;font-size:10.6px;line-height:13px;color:#151515;white-space:nowrap;">Command</div>
<div style="left:1358px;top:167px;font-size:10.6px;line-height:13px;color:#151515;white-space:nowrap;">Description</div>
<div style="left:1101px;top:202px;width:438px;height:1px;background:#bcc0c0"></div>
<div style="left:1108px;top:188px;font-size:10.6px;line-height:13px;color:#151515;white-space:nowrap;">_SWS_COLLAPSE</div>
<div style="left:1358px;top:188px;font-size:10.6px;line-height:13px;color:#151515;white-space:nowrap;">Set selected folder(s) collapsed</div>
<div style="left:1101px;top:219px;width:438px;height:1px;background:#bcc0c0"></div>
<div style="left:1108px;top:205px;font-size:10.6px;line-height:13px;color:#151515;white-space:nowrap;">!</div>
<div style="left:1358px;top:205px;font-size:10.6px;line-height:13px;color:#151515;white-space:nowrap;">----- Step -----</div>
<div style="left:1101px;top:236px;width:438px;height:1px;background:#bcc0c0"></div>
<div style="left:1108px;top:222px;font-size:10.6px;line-height:13px;color:#151515;white-space:nowrap;">_SWS_UNCOLLAPSE</div>
<div style="left:1358px;top:222px;font-size:10.6px;line-height:13px;color:#151515;white-space:nowrap;">Set selected folder(s) uncollapsed</div>
<div style="left:1352px;top:186px;width:1px;height:51px;background:#bcc0c0"></div>
<div style="left:1101px;top:438px;width:438px;height:18px;background:#eaebeb"></div>
<div style="left:1120px;top:440px;width:337px;height:14px;background:linear-gradient(#f2f2f2,#dcdcdc);border:1px solid #9ca0a0;border-radius:2px"></div>
<svg style="left:1280px;top:443px" width="10" height="8"><path d="M2 1 V7 M5 1 V7 M8 1 V7" stroke="#333" stroke-width="1"/></svg>
<svg style="left:1105px;top:442px" width="8" height="10"><path d="M6 1 L2 5 L6 9 Z" fill="#222"/></svg>
<svg style="left:1526px;top:442px" width="8" height="10"><path d="M2 1 L6 5 L2 9 Z" fill="#222"/></svg>
<div style="left:653px;top:465px;width:69px;height:24px;background:#656b71;color:#a3a8ac;font-size:10.5px;line-height:24px;text-align:center;white-space:nowrap;">Apply</div>
<div style="left:726px;top:465px;width:69px;height:24px;background:#232323;color:#c7cfdc;font-size:10.5px;line-height:24px;text-align:center;white-space:nowrap;">Cancel</div>
<div style="left:800px;top:465px;width:73px;height:24px;background:#232323;color:#c7cfdc;font-size:10.5px;line-height:24px;text-align:center;white-space:nowrap;">Import/export</div>
<div style="left:878px;top:465px;width:69px;height:24px;background:#232323;color:#c7cfdc;font-size:10.5px;line-height:24px;text-align:center;white-space:nowrap;">Action list...</div>
<div style="left:1494px;top:468px;font-size:19px;line-height:20px;font-weight:bold;font-style:italic;color:#d4d8d8;letter-spacing:-1px">S&amp;M</div>
<svg style="left:1538px;top:486px" width="10" height="10"><g fill="#f4f4f4"><rect x="7" y="1" width="2" height="2"/><rect x="4" y="4" width="2" height="2"/><rect x="7" y="4" width="2" height="2"/><rect x="1" y="7" width="2" height="2"/><rect x="4" y="7" width="2" height="2"/><rect x="7" y="7" width="2" height="2"/></g></svg>
<div style="left:743px;top:514px;width:665px;height:466px;background:rgba(0,0,0,0.17);border-radius:9px"></div>
<div style="left:750px;top:520px;width:651px;height:460px;background:#2c3034;border-radius:7px 7px 2px 2px"></div>
<div style="left:751px;top:521px;width:649px;height:458px;background:#e4f0f4;border-radius:6px 6px 1px 1px"></div>
<div style="left:752px;top:522px;width:647px;height:456px;background:#7a868f;border-radius:5px 5px 0 0"></div>
<div style="left:752px;top:522px;width:647px;height:25px;background:linear-gradient(#707a84 0,#747e88 20px,#7a848e 27px);border-radius:5px 5px 0 0"></div>
<div style="left:756px;top:546px;width:640px;height:432px;background:#eaf0f2"></div>
<div style="left:757px;top:547px;width:638px;height:430px;background:#484c50"></div>
<div style="left:758px;top:548px;width:636px;height:428px;background:#f9f9f9"></div>
<svg style="left:753px;top:522px" width="644" height="25"><path d="M201 0 H455 L477 25 H216 Z" fill="#606364"/><rect x="428" y="0" width="6" height="25" fill="#56646e" opacity="0.85"/><path d="M455 0 H500 L530 25 H477 Z" fill="#6c757c"/></svg>
<svg style="left:757px;top:525px" width="17" height="17"><path d="M5.5 4 Q10 2.6 15.6 7 Q14.2 12.5 8.5 16.2 Q8.6 9 5.5 4 Z" fill="#b57850"/><path d="M7 3.6 Q11 3 15.4 6.6 L14.6 8.6 Q11 5.6 8 6 Z" fill="#c48a78"/><path d="M0.6 5.8 Q2 4.2 4 4.3 Q7.2 9 7.9 16 Q1 13.2 0.6 5.8 Z" fill="#5cc22e"/><path d="M1.6 4.8 Q4.5 2.6 6.6 3.6 Q9.6 9 9 15.6 L7.6 16 Q7.4 9 4.6 4.7 Q3 4.3 1.6 4.8 Z" fill="#fafafa"/><path d="M3 3.2 A7.3 7.3 0 0 1 15.9 7.2 L14.3 7.5 A5.7 5.7 0 0 0 4.4 4.4 Z" fill="#2a92e4"/></svg>
<div style="left:778px;top:527px;font-size:10.9px;line-height:14px;color:#111;white-space:nowrap;text-shadow:0 0 5px #b8c2c8,0 0 9px #b8c2c8,0 0 3px #d0d6da">REAPER Preferences</div>
<svg style="left:1326px;top:522px" width="16" height="18"><path d="M4 2 H12 V4 H10.5 V9 L13 11 V12 H3 V11 L5.5 9 V4 H4 Z" fill="#fff"/><rect x="7.4" y="12" width="1.3" height="5" fill="#fff"/><rect x="7" y="4" width="1" height="5" fill="#777"/></svg>
<div style="left:1347px;top:521px;width:47px;height:18px;border:1px solid #b8c2ca;border-top:none;border-radius:0 0 4px 4px;background:linear-gradient(#727c84,#7e8890)"></div>
<svg style="left:1365px;top:524px" width="12" height="11"><path d="M2 2 L10 9 M10 2 L2 9" stroke="#fff" stroke-width="2.2" stroke-linecap="round"/></svg>
<div style="left:764px;top:556px;width:140px;height:390px;background:#828790"></div>
<div style="left:765px;top:557px;width:138px;height:388px;background:#fbfbfb"></div>
<div style="left:779px;top:559px;font-size:10.5px;line-height:13px;color:#111;white-space:nowrap;">Seeking</div>
<div style="left:779px;top:575px;font-size:10.5px;line-height:13px;color:#111;white-space:nowrap;">Recording</div>
<div style="left:779px;top:591px;font-size:10.5px;line-height:13px;color:#111;white-space:nowrap;">Loop Recording</div>
<div style="left:779px;top:607px;font-size:10.5px;line-height:13px;color:#111;white-space:nowrap;">Rendering</div>
<div style="left:771px;top:623px;font-size:10.5px;line-height:13px;color:#111;white-space:nowrap;">Appearance</div>
<div style="left:779px;top:639px;font-size:10.5px;line-height:13px;color:#111;white-space:nowrap;">Media</div>
<div style="left:779px;top:655px;font-size:10.5px;line-height:13px;color:#111;white-space:nowrap;">Peaks/Waveforms</div>
<div style="left:779px;top:671px;font-size:10.5px;line-height:13px;color:#111;white-space:nowrap;">Fades/Crossfades</div>
<div style="left:779px;top:687px;font-size:10.5px;line-height:13px;color:#111;white-space:nowrap;">Track Control Panels</div>
<div style="left:771px;top:703px;font-size:10.5px;line-height:13px;color:#111;white-space:nowrap;">Editing Behavior</div>
<div style="left:779px;top:719px;font-size:10.5px;line-height:13px;color:#111;white-space:nowrap;">Envelope Display</div>
<div style="left:779px;top:735px;font-size:10.5px;line-height:13px;color:#111;white-space:nowrap;">Automation</div>
<div style="left:779px;top:751px;font-size:10.5px;line-height:13px;color:#111;white-space:nowrap;">Mouse</div>
<div style="left:779px;top:767px;font-size:10.5px;line-height:13px;color:#111;white-space:nowrap;">Mouse Modifiers</div>
<div style="left:779px;top:783px;font-size:10.5px;line-height:13px;color:#111;white-space:nowrap;">MIDI Editor</div>
<div style="left:771px;top:799px;font-size:10.5px;line-height:13px;color:#111;white-space:nowrap;">Media</div>
<div style="left:779px;top:815px;font-size:10.5px;line-height:13px;color:#111;white-space:nowrap;">MIDI</div>
<div style="left:779px;top:831px;font-size:10.5px;line-height:13px;color:#111;white-space:nowrap;">Video/REX/Misc</div>
<div style="left:771px;top:847px;font-size:10.5px;line-height:13px;color:#111;white-space:nowrap;">Plug-ins</div>
<div style="left:779px;top:863px;font-size:10.5px;line-height:13px;color:#111;white-space:nowrap;">Compatibility</div>
<div style="left:779px;top:879px;font-size:10.5px;line-height:13px;color:#111;white-space:nowrap;">VST</div>
<div style="left:779px;top:895px;font-size:10.5px;line-height:13px;color:#111;white-space:nowrap;">ReWire/DX</div>
<div style="left:779px;top:911px;font-size:10.5px;line-height:13px;color:#111;white-space:nowrap;">ReaScript</div>
<div style="left:779px;top:927px;font-size:10.5px;line-height:13px;color:#111;white-space:nowrap;">ReaMote</div>
<div style="left:886px;top:557px;width:16px;height:388px;background:linear-gradient(90deg,#e8e8e8,#f0f0f0 50%,#e8e8e8)"></div>
<div style="left:886px;top:681px;width:15px;height:224px;background:linear-gradient(90deg,#f2f2f2,#e2e2e2 60%,#d4d4d4);border:1px solid #a0a0a0;border-radius:2px"></div>
<svg style="left:889px;top:789px" width="8" height="8"><path d="M1 1.5 H7 M1 3.5 H7 M1 5.5 H7" stroke="#555" stroke-width="1"/></svg>
<svg style="left:888px;top:563px" width="10" height="6"><path d="M1 5 L5 1 L9 5 Z" fill="#444"/></svg>
<svg style="left:888px;top:932px" width="10" height="6"><path d="M1 1 L5 5 L9 1 Z" fill="#444"/></svg>
<div style="left:907px;top:563px;width:479px;height:378px;border:1px solid #d5dfe5;border-radius:3px"></div>
<div style="left:913px;top:556px;width:82px;height:12px;background:#f8f8f8"></div>
<div style="left:916px;top:556px;font-size:10.5px;line-height:13px;color:#111;white-space:nowrap;">Mouse modifiers</div>
<div style="left:918px;top:578px;font-size:10.5px;line-height:13px;color:#111;white-space:nowrap;">Context:</div>
<div style="left:961px;top:574px;width:169px;height:21px;border:1px solid #707070;border-radius:3px;background:linear-gradient(#f2f2f2 0,#ebebeb 50%,#dddddd 50%,#cfcfcf)"></div>
<div style="left:965px;top:578px;font-size:10.5px;line-height:13px;color:#111;white-space:nowrap;">Track control panel</div>
<svg style="left:1116px;top:581px" width="9" height="6"><path d="M0.5 0.5 H8.5 L4.5 5 Z" fill="#111"/></svg>
<div style="left:1132px;top:574px;width:81px;height:21px;border:1px solid #707070;border-radius:3px;background:linear-gradient(#f2f2f2 0,#ebebeb 50%,#dddddd 50%,#cfcfcf)"></div>
<div style="left:1135px;top:578px;font-size:10.5px;line-height:13px;color:#111;white-space:nowrap;">double click</div>
<svg style="left:1199px;top:581px" width="9" height="6"><path d="M0.5 0.5 H8.5 L4.5 5 Z" fill="#111"/></svg>
<div style="left:1300px;top:575px;width:76px;height:21px;border:1px solid #707070;border-radius:3px;background:linear-gradient(#f2f2f2 0,#ebebeb 50%,#dddddd 50%,#cfcfcf)"></div>
<div style="left:1300px;top:579px;width:76px;text-align:center;font-size:10.5px;line-height:13px;color:#111;white-space:nowrap;">Import/export</div>
<div style="left:918px;top:605px;width:458px;height:306px;background:#828790"></div>
<div style="left:919px;top:606px;width:456px;height:304px;background:#fbfbfb"></div>
<div style="left:920px;top:629px;width:452px;height:1px;background:#dfe6ea"></div>
<div style="left:1019px;top:615px;width:1px;height:14px;background:#e2eaee"></div>
<div style="left:1370px;top:612px;width:1px;height:17px;background:#e2eaee"></div>
<div style="left:926px;top:613px;font-size:10.5px;line-height:13px;color:#111;white-space:nowrap;">Modifier</div>
<div style="left:1026px;top:613px;font-size:10.5px;line-height:13px;color:#111;white-space:nowrap;">Behavior</div>
<div style="left:926px;top:634px;font-size:10.5px;line-height:13px;color:#111;white-space:nowrap;">Default action</div>
<div style="left:1026px;top:634px;font-size:10.5px;line-height:13px;color:#111;white-space:nowrap;">Select all media items on track</div>
<div style="left:926px;top:651px;font-size:10.5px;line-height:13px;color:#111;white-space:nowrap;">Shift</div>
<div style="left:1026px;top:651px;font-size:10.5px;line-height:13px;color:#111;white-space:nowrap;">Add all media items on track to selection</div>
<div style="left:926px;top:668px;font-size:10.5px;line-height:13px;color:#111;white-space:nowrap;">Ctrl</div>
<div style="left:1026px;top:668px;font-size:10.5px;line-height:13px;color:#111;white-space:nowrap;">Toggle selection for all media items on track</div>
<div style="left:926px;top:685px;font-size:10.5px;line-height:13px;color:#111;white-space:nowrap;">Shift+Ctrl</div>
<div style="left:926px;top:702px;font-size:10.5px;line-height:13px;color:#111;white-space:nowrap;">Alt</div>
<div style="left:926px;top:719px;font-size:10.5px;line-height:13px;color:#111;white-space:nowrap;">Shift+Alt</div>
<div style="left:926px;top:736px;font-size:10.5px;line-height:13px;color:#111;white-space:nowrap;">Ctrl+Alt</div>
<div style="left:926px;top:753px;font-size:10.5px;line-height:13px;color:#111;white-space:nowrap;">Shift+Ctrl+Alt</div>
<div style="left:926px;top:787px;font-size:10.5px;line-height:13px;color:#111;white-space:nowrap;">Shift+Win</div>
<div style="left:926px;top:804px;font-size:10.5px;line-height:13px;color:#111;white-space:nowrap;">Ctrl+Win</div>
<div style="left:1026px;top:804px;font-size:10.5px;line-height:13px;color:#111;white-space:nowrap;">&#8226; user_Folder Hide</div>
<div style="left:926px;top:821px;font-size:10.5px;line-height:13px;color:#111;white-space:nowrap;">Shift+Ctrl+Win</div>
<div style="left:926px;top:838px;font-size:10.5px;line-height:13px;color:#111;white-space:nowrap;">Alt+Win</div>
<div style="left:926px;top:855px;font-size:10.5px;line-height:13px;color:#111;white-space:nowrap;">Shift+Alt+Win</div>
<div style="left:926px;top:872px;font-size:10.5px;line-height:13px;color:#111;white-space:nowrap;">Ctrl+Alt+Win</div>
<div style="left:926px;top:889px;font-size:10.5px;line-height:13px;color:#111;white-space:nowrap;">Shift+Ctrl+Alt+Win</div>
<div style="left:764px;top:955px;width:51px;height:15px;border:1px solid #c5ccd2;border-radius:2px;background:#fcfcfc"></div>
<div style="left:818px;top:955px;width:42px;height:15px;border:1px solid #707070;border-radius:3px;background:linear-gradient(#f2f2f2 0,#ebebeb 45%,#dddddd 45%)"></div>
<div style="left:818px;top:957px;width:42px;text-align:center;font-size:10.5px;line-height:13px;color:#111;white-space:nowrap;">Find</div>
<div style="left:1212px;top:953px;width:54px;height:15px;border:1px solid #707070;border-radius:3px;background:linear-gradient(#f2f2f2 0,#ebebeb 45%,#dddddd 45%)"></div>
<div style="left:1212px;top:956px;width:54px;text-align:center;font-size:10.5px;line-height:13px;color:#111;white-space:nowrap;">OK</div>
<div style="left:1272px;top:953px;width:54px;height:15px;border:1px solid #707070;border-radius:3px;background:linear-gradient(#f2f2f2 0,#ebebeb 45%,#dddddd 45%)"></div>
<div style="left:1272px;top:956px;width:54px;text-align:center;font-size:10.5px;line-height:13px;color:#111;white-space:nowrap;">Cancel</div>
<div style="left:1332px;top:953px;width:54px;height:15px;border:1px solid #c0c6cc;border-radius:3px;background:#f4f4f4"></div>
<div style="left:1332px;top:956px;width:54px;text-align:center;font-size:10.5px;line-height:13px;color:#111;white-space:nowrap;color:#a0a0a0;">Apply</div>
<div style="left:1447px;top:644px;width:140px;height:330px;background:rgba(0,0,0,0.16);border-radius:9px 0 0 0"></div>
<div style="left:1453px;top:650px;width:130px;height:320px;background:#2c3034"></div>
<div style="left:1454px;top:651px;width:130px;height:320px;background:#eef4f6"></div>
<div style="left:1455px;top:652px;width:130px;height:320px;background:#8a939b"></div>
<div style="left:1455px;top:652px;width:130px;height:21px;background:linear-gradient(#a4aeb6 0,#b8c0c6 4px,#c4cacc 8px,#c0c6ca 18px,#aab4ba 21px)"></div>
<div style="left:1461px;top:656px;font-size:12px;line-height:14px;color:#111;white-space:nowrap">Performance Meter</div>
<div style="left:1458px;top:673px;width:130px;height:300px;background:#eef2f4"></div>
<div style="left:1459px;top:674px;width:130px;height:300px;background:#2a2e32"></div>
<div style="left:1460px;top:675px;width:130px;height:300px;background:#b8bcbc"></div>
<div style="left:1466px;top:682px;width:110px;height:35px;background:#222"></div>
<div style="left:1467px;top:683px;width:110px;height:16px;background:#bfc3c3"></div>
<div style="left:1467px;top:700px;width:110px;height:16px;background:#bfc3c3"></div>
<div style="left:1467px;top:683px;width:26px;height:12px;background:#00582e"></div>
<div style="left:1467px;top:695px;width:26px;height:21px;background:#004a3e"></div>
<div style="left:1495px;top:684px;font-size:8.5px;line-height:10px;color:#222;white-space:nowrap;letter-spacing:0.2px">cur/avg: 0.00/0.34</div>
<div style="left:1466px;top:726px;font-size:10.5px;line-height:12.5px;color:#141414;white-space:nowrap;">Total CPU: 0.0%<br>RT CPU: 0.2%</div>
<div style="left:1466px;top:765px;font-size:10.5px;line-height:12.5px;color:#141414;white-space:nowrap;">Disk read: 0B/s<br>Disk write: 0B/s</div>
<div style="left:1466px;top:803px;font-size:10.5px;line-height:12.5px;color:#141414;white-space:nowrap;">RAM use: 1009MB<br>System free: 59135MB</div>
<div style="left:1466px;top:843px;font-size:10.5px;line-height:12.5px;color:#141414;white-space:nowrap;">1 FX: 0.09% CPU</div>
<div style="left:1466px;top:882px;width:110px;height:90px;background:#828790"></div>
<div style="left:1467px;top:883px;width:110px;height:90px;background:#d9dcdb"></div>
<div style="left:1467px;top:883px;width:110px;height:24px;background:linear-gradient(#fafcfd 0,#fafcfd 35%,#dcf0f6 35%);border:1px solid #8ccdf0;border-right:none"></div>
<svg style="left:1544px;top:884px" width="10" height="6"><path d="M1 5 L5 1 L9 5" fill="none" stroke="#3c8cc8" stroke-width="1.2"/></svg>
<div style="left:1474px;top:889px;font-size:10.5px;line-height:13px;color:#111;white-space:nowrap;">Track</div>
<div style="left:1474px;top:911px;font-size:10.5px;line-height:13px;color:#111;white-space:nowrap;">Master</div>
<div style="left:1474px;top:928px;font-size:10.5px;line-height:13px;color:#111;white-space:nowrap;">1</div>
<div style="left:1474px;top:945px;font-size:10.5px;line-height:13px;color:#111;white-space:nowrap;">2: Hz drums set 01</div>
<div style="left:1474px;top:962px;font-size:10.5px;line-height:13px;color:#111;white-space:nowrap;">3: hz_drums_01_audio</div>
<svg style="left:496px;top:259px" width="14" height="22"><path d="M1 1 V17 L4.8 13.3 L7.5 19.5 L10 18.4 L7.4 12.4 H12.5 Z" fill="#fff" stroke="#000" stroke-width="1" stroke-linejoin="miter"/></svg>
</body></html>
